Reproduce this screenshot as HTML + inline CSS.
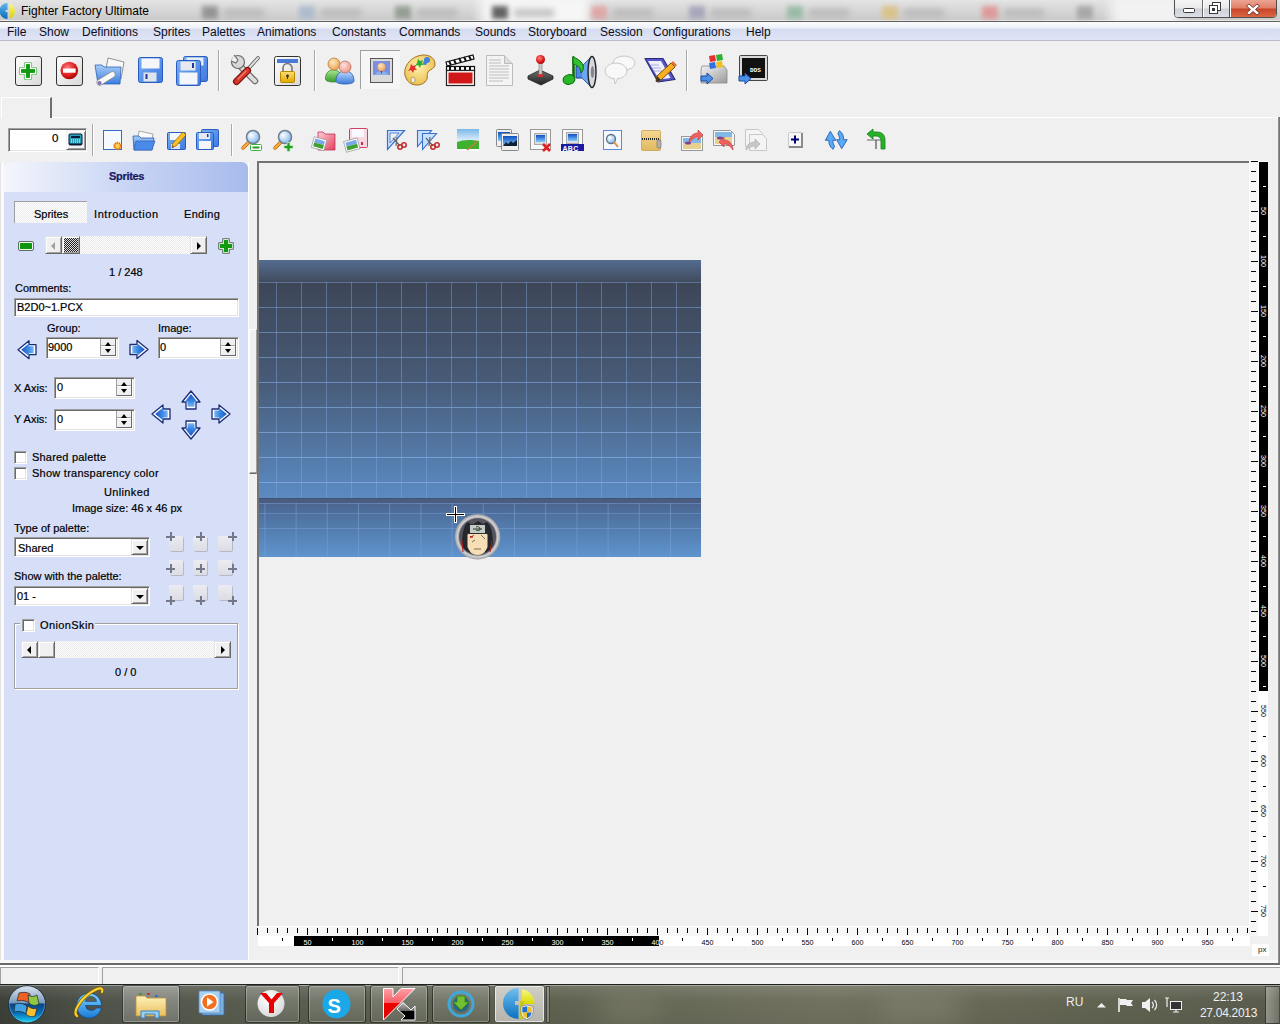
<!DOCTYPE html>
<html><head><meta charset="utf-8">
<style>
*{margin:0;padding:0;box-sizing:border-box}
html,body{width:1280px;height:1024px;overflow:hidden;background:#f0f0f0;font-family:"Liberation Sans",sans-serif;font-size:11px;color:#000}
.a{position:absolute}
.t{position:absolute;font-size:11px;line-height:13px;white-space:nowrap;color:#000;-webkit-text-stroke:0.2px #000}
.b{font-weight:bold}
#title{left:0;top:0;width:1280px;height:21px;background:linear-gradient(#e4e4e4,#d4d4d4 60%,#cacaca);border-bottom:1px solid #e8e8e8}
#tline{left:0;top:21px;width:1280px;height:1px;background:#5f5f5f}
#menu{left:0;top:22px;width:1280px;height:19px;background:linear-gradient(#fbfcfe 0,#eef1f9 6px,#d5dcef 7px,#dfe5f6 18px);border-bottom:1px solid #b9bdcb}
#menu span{position:absolute;top:3px;font-size:12px;line-height:14px;color:#0c0c20}
.sep{position:absolute;width:2px;border-left:1px solid #c5c5c5;border-right:1px solid #fff}
#panel{left:4px;top:162px;width:244px;height:798px;background:#d6dff7;border-radius:6px 6px 0 0;box-shadow:1px 0 0 #fff}
#phead{left:0;top:0;width:244px;height:30px;border-radius:6px 6px 0 0;background:linear-gradient(90deg,#f4f6fc 0%,#c9d5f4 50%,#a8bbed 100%)}


#taskbar{left:0;top:985px;width:1280px;height:39px;background:linear-gradient(90deg,#3f4a42,#5e6656 30%,#737663 60%,#6b705f 80%,#5c6054);border-top:1px solid #2a2f2a}
.fld{background:#fff;border:1px solid;border-color:#a0a0a0 #fff #fff #a0a0a0;box-shadow:inset 1px 1px 0 #696969,inset -1px -1px 0 #e3e3e3}
.chk{width:13px;height:13px;background:#fff;border:1px solid;border-color:#a0a0a0 #fff #fff #a0a0a0;box-shadow:inset 1px 1px 0 #696969,inset -1px -1px 0 #e3e3e3}
.sbtn{background:#f0f0f0;border:1px solid;border-color:#e3e3e3 #696969 #696969 #e3e3e3;box-shadow:inset 1px 1px 0 #fff,inset -1px -1px 0 #a0a0a0}
.track{background:repeating-conic-gradient(#fff 0 25%,#e8e8e8 0 50%) 0 0/2px 2px}
.tabsel{background:repeating-conic-gradient(#fdfdfd 0 25%,#ececec 0 50%) 0 0/2px 2px;border-top:1px solid #a0a0a0;border-left:1px solid #a0a0a0}
.tri-l,.tri-r,.tri-d,.tri-u{position:absolute;width:0;height:0;border:4px solid transparent}
.tri-l{border-left:0;border-right:4px solid #000}
.tri-r{border-right:0;border-left:4px solid #000}
.tri-d{border-bottom:0;border-top:4px solid #000}
.tri-u{border-top:0;border-bottom:4px solid #000}
.spin{width:16px;height:17px;border-left:1px solid #a0a0a0;background:linear-gradient(#f0f0f0 0 6px,#a0a0a0 6px 7px,#fff 7px 8px,#f0f0f0 8px);box-shadow:inset -1px -1px 0 #696969}
.spin:before{content:"";position:absolute;left:4px;top:3px;border:3.5px solid transparent;border-top:0;border-bottom:4px solid #000}
.spin:after{content:"";position:absolute;left:4px;top:10px;border:3.5px solid transparent;border-bottom:0;border-top:4px solid #000}
.sq{width:14px;height:15px;background:linear-gradient(#ececf2,#dcdce4);border-radius:2px;box-shadow:1px 1px 0 #b5b8c6}
.pl{width:9px;height:9px;background:linear-gradient(#747888,#747888) 0 3.5px/9px 2px no-repeat,linear-gradient(#747888,#747888) 3.5px 0/2px 9px no-repeat}
.rl{font-size:8px;line-height:10px;width:18px;text-align:center;transform:rotate(90deg);letter-spacing:-0.3px}
.bl{font-size:8px;line-height:10px;width:30px;text-align:center;letter-spacing:-0.3px}
.tb{top:985px;height:38px;border:1px solid rgba(0,0,0,.55);border-radius:3px;background:linear-gradient(rgba(255,255,255,.22),rgba(255,255,255,.08));box-shadow:inset 0 0 0 1px rgba(255,255,255,.25)}
</style></head><body>
<div id="title" class="a"></div>
<div id="tline" class="a"></div>
<div id="menu" class="a">
<span style="left:7px">File</span><span style="left:39px">Show</span><span style="left:82px">Definitions</span><span style="left:153px">Sprites</span><span style="left:202px">Palettes</span><span style="left:257px">Animations</span><span style="left:332px">Constants</span><span style="left:399px">Commands</span><span style="left:475px">Sounds</span><span style="left:528px">Storyboard</span><span style="left:600px">Session</span><span style="left:653px">Configurations</span><span style="left:746px">Help</span>
</div>
<div id="panel" class="a"><div id="phead" class="a"></div></div>
<div class="t b" style="left:109px;top:170px;color:#1b1d7c;letter-spacing:-0.3px">Sprites</div>
<div class="a tabsel" style="left:14px;top:201px;width:73px;height:22px"></div>
<div class="t" style="left:34px;top:208px">Sprites</div>
<div class="t" style="left:94px;top:208px;letter-spacing:0.6px">Introduction</div>
<div class="t" style="left:184px;top:208px;letter-spacing:0.3px">Ending</div>
<!-- sprite scroller -->
<svg class="a" style="left:16px;top:239px" width="20" height="14" viewBox="16 239 20 14"><rect x="18.5" y="241.5" width="15" height="9" rx="1.5" fill="#f0fff0" stroke="#5a6e5e"/><rect x="20" y="243" width="12" height="6" rx=".5" fill="#0f960f"/></svg>
<div class="a track" style="left:45px;top:236px;width:162px;height:18px"></div>
<div class="a sbtn" style="left:45px;top:236px;width:17px;height:18px"><div class="tri-l" style="left:5px;top:5px;border-right-color:#a0a0a0"></div></div>
<div class="a sbtn" style="left:62px;top:236px;width:18px;height:18px;background:repeating-conic-gradient(#222 0 25%,#ddd 0 50%) 0 0/2px 2px"></div>
<div class="a sbtn" style="left:190px;top:236px;width:17px;height:18px"><div class="tri-r" style="left:6px;top:5px"></div></div>
<svg class="a" style="left:216px;top:236px" width="20" height="20" viewBox="216 236 20 20"><path d="M222.7 238.7h6.6v4.0h4.0v6.6h-4.0v4.0h-6.6v-4.0h-4.0v-6.6h4.0z" fill="#f0fff0" stroke="#5a6e5e" stroke-width="1" stroke-linejoin="round"/><path d="M223.9 239.9h4.2v3.9999999999999996h3.9999999999999996v4.2h-3.9999999999999996v3.9999999999999996h-4.2v-3.9999999999999996h-3.9999999999999996v-4.2h3.9999999999999996z" fill="#109a10"/></svg>
<div class="t" style="left:109px;top:266px">1 / 248</div>
<div class="t" style="left:15px;top:282px">Comments:</div>
<div class="a fld" style="left:14px;top:298px;width:225px;height:19px"></div>
<div class="t" style="left:17px;top:301px">B2D0~1.PCX</div>
<div class="t" style="left:47px;top:322px">Group:</div>
<div class="t" style="left:158px;top:322px">Image:</div>
<div class="a fld" style="left:46px;top:337px;width:73px;height:22px"></div>
<div class="t" style="left:48px;top:341px">9000</div>
<div class="a spin" style="left:100px;top:339px"></div>
<div class="a fld" style="left:158px;top:337px;width:81px;height:22px"></div>
<div class="t" style="left:160px;top:341px">0</div>
<div class="a spin" style="left:220px;top:339px"></div>
<div class="t" style="left:14px;top:382px">X Axis:</div>
<div class="a fld" style="left:54px;top:377px;width:81px;height:22px"></div>
<div class="t" style="left:57px;top:381px">0</div>
<div class="a spin" style="left:116px;top:379px"></div>
<div class="t" style="left:14px;top:413px">Y Axis:</div>
<div class="a fld" style="left:54px;top:409px;width:81px;height:22px"></div>
<div class="t" style="left:57px;top:413px">0</div>
<div class="a spin" style="left:116px;top:411px"></div>
<!-- nav arrows -->
<svg class="a" style="left:0;top:330px" width="250" height="120" viewBox="0 330 250 120">
<defs><linearGradient id="arg" x1="0" y1="0" x2="0" y2="1"><stop offset="0" stop-color="#1d55c4"/><stop offset=".6" stop-color="#3c8ae6"/><stop offset="1" stop-color="#78b8f4"/></linearGradient></defs>
<g transform="translate(27 349.7) rotate(-90)"><path d="M0 -9L9 2H5V9H-5V2H-9Z" fill="#fff" stroke="#1b2a74" stroke-width="1.3" stroke-linejoin="round"/><path d="M0 -9L9 2H5V9H-5V2H-9Z" transform="scale(.7) translate(0 .6)" fill="url(#arg)"/></g>
<g transform="translate(139 349.5) rotate(90)"><path d="M0 -9L9 2H5V9H-5V2H-9Z" fill="#fff" stroke="#1b2a74" stroke-width="1.3" stroke-linejoin="round"/><path d="M0 -9L9 2H5V9H-5V2H-9Z" transform="scale(.7) translate(0 .6)" fill="url(#arg)"/></g>
<g transform="translate(191 400) rotate(0)"><path d="M0 -9L9 2H5V9H-5V2H-9Z" fill="#fff" stroke="#1b2a74" stroke-width="1.3" stroke-linejoin="round"/><path d="M0 -9L9 2H5V9H-5V2H-9Z" transform="scale(.7) translate(0 .6)" fill="url(#arg)"/></g>
<g transform="translate(191 430) rotate(180)"><path d="M0 -9L9 2H5V9H-5V2H-9Z" fill="#fff" stroke="#1b2a74" stroke-width="1.3" stroke-linejoin="round"/><path d="M0 -9L9 2H5V9H-5V2H-9Z" transform="scale(.7) translate(0 .6)" fill="url(#arg)"/></g>
<g transform="translate(161 414) rotate(-90)"><path d="M0 -9L9 2H5V9H-5V2H-9Z" fill="#fff" stroke="#1b2a74" stroke-width="1.3" stroke-linejoin="round"/><path d="M0 -9L9 2H5V9H-5V2H-9Z" transform="scale(.7) translate(0 .6)" fill="url(#arg)"/></g>
<g transform="translate(221 414) rotate(90)"><path d="M0 -9L9 2H5V9H-5V2H-9Z" fill="#fff" stroke="#1b2a74" stroke-width="1.3" stroke-linejoin="round"/><path d="M0 -9L9 2H5V9H-5V2H-9Z" transform="scale(.7) translate(0 .6)" fill="url(#arg)"/></g>
</svg>
<div class="a chk" style="left:14px;top:451px"></div>
<div class="t" style="left:32px;top:451px;letter-spacing:0.2px">Shared palette</div>
<div class="a chk" style="left:14px;top:467px"></div>
<div class="t" style="left:32px;top:467px;letter-spacing:0.25px">Show transparency color</div>
<div class="t" style="left:104px;top:486px;letter-spacing:0.35px">Unlinked</div>
<div class="t" style="left:72px;top:502px">Image size: 46 x 46 px</div>
<div class="t" style="left:14px;top:522px">Type of palette:</div>
<div class="a fld" style="left:14px;top:537px;width:136px;height:20px"></div>
<div class="t" style="left:18px;top:542px">Shared</div>
<div class="a sbtn" style="left:131px;top:539px;width:17px;height:16px"><div class="tri-d" style="left:4px;top:6px"></div></div>
<div class="t" style="left:14px;top:570px">Show with the palette:</div>
<div class="a fld" style="left:14px;top:586px;width:136px;height:20px"></div>
<div class="t" style="left:17px;top:590px">01 -</div>
<div class="a sbtn" style="left:131px;top:588px;width:17px;height:16px"><div class="tri-d" style="left:4px;top:6px"></div></div>
<!-- align grid -->
<div class="a sq" style="left:169px;top:536px"></div>
<div class="a pl" style="left:166px;top:532px"></div>
<div class="a sq" style="left:193px;top:536px"></div>
<div class="a pl" style="left:196px;top:532px"></div>
<div class="a sq" style="left:218px;top:536px"></div>
<div class="a pl" style="left:228px;top:532px"></div>
<div class="a sq" style="left:169px;top:560px"></div>
<div class="a pl" style="left:166px;top:564px"></div>
<div class="a sq" style="left:193px;top:560px"></div>
<div class="a pl" style="left:196px;top:564px"></div>
<div class="a sq" style="left:218px;top:560px"></div>
<div class="a pl" style="left:228px;top:564px"></div>
<div class="a sq" style="left:169px;top:585px"></div>
<div class="a pl" style="left:166px;top:596px"></div>
<div class="a sq" style="left:193px;top:585px"></div>
<div class="a pl" style="left:196px;top:596px"></div>
<div class="a sq" style="left:218px;top:585px"></div>
<div class="a pl" style="left:228px;top:596px"></div><!-- groupbox -->
<div class="a" style="left:14px;top:623px;width:224px;height:66px;border:1px solid #a0a0a0;box-shadow:1px 1px 0 #fff, inset 1px 1px 0 #fff"></div>
<div class="a" style="left:20px;top:617px;width:75px;height:14px;background:#d6dff7"></div>
<div class="a chk" style="left:22px;top:619px"></div>
<div class="t" style="left:40px;top:619px;letter-spacing:0.4px">OnionSkin</div>
<div class="a track" style="left:21px;top:641px;width:210px;height:17px"></div>
<div class="a sbtn" style="left:21px;top:641px;width:17px;height:17px"><div class="tri-l" style="left:5px;top:4px"></div></div>
<div class="a sbtn" style="left:38px;top:641px;width:17px;height:17px"></div>
<div class="a sbtn" style="left:214px;top:641px;width:17px;height:17px"><div class="tri-r" style="left:6px;top:4px"></div></div>
<div class="t" style="left:115px;top:666px">0 / 0</div>
<!-- toolbar 1 -->
<svg class="a" style="left:0;top:41px" width="800" height="58" viewBox="0 41 800 58">
<defs>
<linearGradient id="btng" x1="0" y1="0" x2="1" y2="1"><stop offset="0" stop-color="#ffffff"/><stop offset="1" stop-color="#d8d8d8"/></linearGradient>
<radialGradient id="redg" cx=".4" cy=".35" r=".7"><stop offset="0" stop-color="#ff8080"/><stop offset=".6" stop-color="#e02020"/><stop offset="1" stop-color="#a00000"/></radialGradient>
<linearGradient id="blueg" x1="0" y1="0" x2="0" y2="1"><stop offset="0" stop-color="#a9cdf6"/><stop offset="1" stop-color="#3a7de0"/></linearGradient>
<linearGradient id="flopg" x1="0" y1="0" x2="1" y2="1"><stop offset="0" stop-color="#7ab0f4"/><stop offset="1" stop-color="#3d78e0"/></linearGradient>
<linearGradient id="goldg" x1="0" y1="0" x2="0" y2="1"><stop offset="0" stop-color="#ffe070"/><stop offset="1" stop-color="#e0a800"/></linearGradient>
<linearGradient id="grayg" x1="0" y1="0" x2="1" y2="1"><stop offset="0" stop-color="#f4f4f4"/><stop offset="1" stop-color="#9a9a9a"/></linearGradient>
<radialGradient id="headg" cx=".4" cy=".35" r=".7"><stop offset="0" stop-color="#ffe8c0"/><stop offset="1" stop-color="#e8a050"/></radialGradient>
<radialGradient id="headp" cx=".4" cy=".35" r=".7"><stop offset="0" stop-color="#ffe4e0"/><stop offset="1" stop-color="#e89080"/></radialGradient>
<linearGradient id="bodyg" x1="0" y1="0" x2="0" y2="1"><stop offset="0" stop-color="#a8e890"/><stop offset="1" stop-color="#3a9a30"/></linearGradient>
<linearGradient id="bodyb" x1="0" y1="0" x2="0" y2="1"><stop offset="0" stop-color="#c0dcff"/><stop offset="1" stop-color="#3a7ad8"/></linearGradient>
<radialGradient id="palg" cx=".45" cy=".4" r=".7"><stop offset="0" stop-color="#fff0b0"/><stop offset="1" stop-color="#e8b840"/></radialGradient>
<linearGradient id="joyg" x1="0" y1="0" x2="0" y2="1"><stop offset="0" stop-color="#707070"/><stop offset="1" stop-color="#202020"/></linearGradient>
</defs>
<!-- plus button -->
<rect x="15.5" y="56.5" width="26" height="29" rx="2.5" fill="url(#btng)" stroke="#333"/>
<path d="M25.5 63.5h5v5h5v5h-5v5h-5v-5h-5v-5h5z" fill="#12921a" stroke="#5cc25c" stroke-width="3.2" stroke-linejoin="round"/>
<path d="M25.5 63.5h5v5h5v5h-5v5h-5v-5h-5v-5h5z" fill="#12921a" stroke="#fff" stroke-width="1.4" stroke-linejoin="round"/>
<path d="M26.2 64.2h3.6v5h5v3.6h-5v5h-3.6v-5h-5v-3.6h5z" fill="#129a12"/>
<!-- minus button -->
<rect x="56.5" y="56.5" width="26" height="29" rx="2.5" fill="url(#btng)" stroke="#333"/>
<circle cx="69.3" cy="70.5" r="8.8" fill="url(#redg)"/>
<rect x="63" y="68.5" width="12.6" height="4.2" fill="#fff"/>
<!-- folder with gamepad -->
<path d="M108 58l16 4-3 17-16-4z" fill="#f8f8f8" stroke="#777" stroke-width=".8"/>
<path d="M95 65h7l2 2h17l-1 17h-22z" fill="url(#blueg)" stroke="#2f63b8" stroke-width=".8"/>
<path d="M98 80l13-8c3-2 6 3 3 5l-13 8c-3 2-6-3-3-5z" fill="#fafafa" stroke="#888" stroke-width=".8"/>
<circle cx="99.5" cy="83" r="2" fill="#8070b0"/>
<!-- floppy -->
<rect x="138.5" y="57.5" width="24" height="25" rx="2" fill="url(#flopg)" stroke="#2a5cc0"/>
<rect x="141.5" y="58.5" width="18" height="10" fill="#f4f6fb"/>
<rect x="143.5" y="72.5" width="13" height="9" fill="#dfe3ea"/>
<rect x="145.5" y="74" width="2" height="5" fill="#1a3aa0"/>
<!-- double floppy -->
<rect x="183.5" y="56.5" width="24" height="25" rx="2" fill="url(#flopg)" stroke="#2a5cc0"/>
<rect x="186.5" y="57.5" width="17" height="8" fill="#e8ecf4"/>
<rect x="176.5" y="60.5" width="24" height="25" rx="2" fill="url(#flopg)" stroke="#2a5cc0"/>
<rect x="180.5" y="61.5" width="15" height="9" fill="#e6e9ef"/>
<rect x="192" y="63" width="2" height="5" fill="#1a3aa0"/>
<rect x="179.5" y="72.5" width="18" height="12" fill="#f4f6fb"/>
<!-- separator -->
<rect x="218" y="50" width="1" height="41" fill="#a8a8a8"/><rect x="219" y="50" width="1" height="41" fill="#fff"/>
<!-- tools -->
<path d="M238 64l17 17" stroke="#6a6a6a" stroke-width="6.5" stroke-linecap="round"/>
<path d="M238 64l17 17" stroke="#dcdcdc" stroke-width="4" stroke-linecap="round"/>
<path d="M233 59a7 7 0 0 0 9 9l-2.5-5.5z" fill="#6a6a6a"/>
<circle cx="238" cy="62" r="6.5" fill="#d8d8d8" stroke="#6a6a6a" stroke-width="1.2"/>
<path d="M234 55l4 5-2 3-5-2" fill="#f0f0f0" stroke="#6a6a6a" stroke-width="1.2" stroke-linejoin="round"/>
<path d="M258 58l-10 11" stroke="#5a5a5a" stroke-width="3.6" stroke-linecap="round"/>
<path d="M258 58l-10 11" stroke="#e0e0e0" stroke-width="2" stroke-linecap="round"/>
<path d="M247.5 70.5l-11 11" stroke="#7a1010" stroke-width="7" stroke-linecap="round"/>
<path d="M247.5 70.5l-11 11" stroke="#d83828" stroke-width="4.6" stroke-linecap="round"/>
<path d="M246 71l-8 8" stroke="#f08070" stroke-width="1.2" stroke-linecap="round"/>
<!-- lock window -->
<rect x="274.5" y="56.5" width="26" height="29" rx="2" fill="url(#btng)" stroke="#333"/>
<rect x="277" y="59" width="21" height="4" fill="#4a7ad8"/>
<path d="M283 72v-4a4.5 4.5 0 0 1 9 0v4" fill="none" stroke="#777" stroke-width="1.6"/>
<rect x="280.5" y="71.5" width="14" height="11" rx="1" fill="url(#goldg)" stroke="#b88a00"/>
<circle cx="287.5" cy="76" r="1.4" fill="#333"/><rect x="287" y="76" width="1" height="3" fill="#333"/>
<!-- separator -->
<rect x="314" y="50" width="1" height="41" fill="#a8a8a8"/><rect x="315" y="50" width="1" height="41" fill="#fff"/>
<!-- people -->
<path d="M325.5 79c0-6 3-9 8-9s8 3 8 9c0 2-3 3-8 3s-8-1-8-3z" fill="url(#bodyg)" stroke="#3a8a30" stroke-width=".8"/>
<circle cx="334" cy="64" r="6" fill="url(#headg)" stroke="#c07830" stroke-width=".8"/>
<path d="M336 81c0-7 4-10 9-10s9 3 9 10c0 2-4 3-9 3s-9-1-9-3z" fill="url(#bodyb)" stroke="#2a5ab0" stroke-width=".8"/>
<circle cx="345" cy="67" r="6" fill="url(#headp)" stroke="#c07060" stroke-width=".8"/>
<!-- pressed button -->
<rect x="360" y="50" width="40" height="39" fill="#f6f6f6"/>
<rect x="360" y="50" width="40" height="1" fill="#a0a0a0"/><rect x="360" y="50" width="1" height="39" fill="#a0a0a0"/>
<rect x="370.5" y="58.5" width="22" height="24" fill="#dadada" stroke="#555"/>
<rect x="373" y="61" width="17" height="14" fill="#7c8ee0"/>
<circle cx="381.5" cy="67" r="4" fill="url(#headg)"/>
<path d="M375 75c1-3 4-4 6.5-4s5.5 1 6.5 4z" fill="#8ab0e8"/>
<path d="M380.5 71h2l-1 3z" fill="#b02020"/>
<!-- palette -->
<path d="M406 78c-4-8 2-19 12-22 9-3 17 1 17 8 0 5-5 5-7 8-2 4 1 6-3 10-5 5-16 4-19-4z" fill="url(#palg)" stroke="#a07020" stroke-width="1"/>
<ellipse cx="413" cy="80" rx="2" ry="3" fill="#f0f0f0" stroke="#a07020" stroke-width=".6"/>
<path d="M411 64l2 2 3-1-1 3 2 2-3 0-1 3-2-3-3 1 2-3z" fill="#e03030"/>
<path d="M418 59l2 2 3-1-1 3 2 2-3 0-1 3-2-3-3 1 2-3z" fill="#30b030"/>
<circle cx="427" cy="60" r="3" fill="#4080e0"/><circle cx="425" cy="63" r="2" fill="#4080e0"/>
<!-- clapboard -->
<path d="M446 62l27-7 1 4-27 7z" fill="#fff" stroke="#111" stroke-width="1.2"/>
<path d="M449 61l2 4M454 60l2 4M459 58l2 4M464 57l2 4M469 56l2 4" stroke="#111" stroke-width="2"/>
<rect x="446.5" y="66.5" width="28" height="4" fill="#fff" stroke="#111" stroke-width="1.2"/>
<path d="M450 67v3M455 67v3M460 67v3M465 67v3M470 67v3" stroke="#111" stroke-width="2"/>
<rect x="446.5" y="70.5" width="28" height="15" fill="#fff" stroke="#222" stroke-width="1.2"/>
<rect x="448.5" y="72.5" width="24" height="11" fill="#d01818"/>
<!-- document -->
<path d="M486.5 55.5h18l8 8v22h-26z" fill="#f4f4f4" stroke="#bbb"/>
<path d="M504.5 55.5v8h8" fill="#ddd" stroke="#bbb"/>
<path d="M489 60h12M489 63h12M489 66h20M489 69h20M489 72h20M489 75h20M489 78h20M489 81h14" stroke="#bdbdbd" stroke-width="1"/>
<!-- joystick -->
<path d="M528 76l12-6 13 6v3l-12 6-13-6z" fill="url(#joyg)" stroke="#222" stroke-width=".8"/>
<rect x="539" y="63" width="3" height="12" fill="#ccc" stroke="#777" stroke-width=".6"/>
<ellipse cx="540.5" cy="75.5" rx="3" ry="1.5" fill="#d03030"/>
<circle cx="540.5" cy="59.5" r="4.5" fill="url(#redg)"/>
<!-- music speaker -->
<path d="M576 66h6l10-10v32l-10-10h-6z" fill="#4a8ae8" stroke="#1a3a90" stroke-width="1"/>
<path d="M582 66l10-10v32l-10-10z" fill="#7ab4f4" opacity=".7"/>
<ellipse cx="592" cy="72" rx="4" ry="15.5" fill="#d8d8e0" stroke="#222" stroke-width="1.4"/>
<ellipse cx="592.5" cy="72" rx="1.8" ry="6" fill="#888"/>
<path d="M573.5 57v22" stroke="#0a6a0a" stroke-width="2.6"/>
<path d="M573 56c3 3 8 4 10 9 1 3 0 6-2 8 0-4-3-8-8-9z" fill="#30c030" stroke="#0a6a0a" stroke-width="1"/>
<ellipse cx="569" cy="79.5" rx="6" ry="4.8" fill="#2ab82a" stroke="#0a6a0a" stroke-width="1" transform="rotate(-15 569 79.5)"/>
<!-- speech bubbles (disabled) -->
<ellipse cx="624" cy="63" rx="11" ry="7" fill="#f8f8f8" stroke="#c8c8c8" stroke-width="1"/>
<ellipse cx="616" cy="71" rx="11" ry="8" fill="#f8f8f8" stroke="#c8c8c8" stroke-width="1"/>
<path d="M614 78l1 6 3-6" fill="#f8f8f8" stroke="#c8c8c8" stroke-width="1"/>
<!-- notepad pencil -->
<path d="M645 58.5l18 0 12 21-17 2.5z" fill="#5858c8" stroke="#2a2a78" stroke-width="1.2" stroke-linejoin="round"/>
<path d="M648 61l13 0 9.5 17-11.5 1.5z" fill="#eef0ff"/>
<path d="M651 65h8M652 68h9M654 71h8" stroke="#9aa0d0" stroke-width=".8"/>
<path d="M657 76l14-13 4 4-14 13-5 1.5z" fill="#f8b020" stroke="#7a4a00" stroke-width="1"/>
<path d="M671 63l2-2 4 4-2 2z" fill="#e07040"/>
<path d="M657 76l4 4-5 1.5z" fill="#333"/>
<!-- separator -->
<rect x="686" y="50" width="1" height="41" fill="#a8a8a8"/><rect x="687" y="50" width="1" height="41" fill="#fff"/>
<!-- windows drive -->
<path d="M702 66h22l3 4v13h-26v-13z" fill="url(#grayg)" stroke="#888" stroke-width=".8"/>
<path d="M709 56l6-1 1 6-6 1z" fill="#e83030"/><path d="M716 55l6-1 1 6-6 1z" fill="#30b030"/>
<path d="M709 63l6-1 1 6-6 1z" fill="#3070e0"/><path d="M716 62l6-1 1 6-6 1z" fill="#f0c020"/>
<path d="M701 76h6v-3l6 5.5-6 5.5v-3h-6z" fill="#4a90e8" stroke="#1a4aa0" stroke-width="1"/>
<!-- DOS -->
<rect x="739.5" y="55.5" width="28" height="25" rx="1" fill="#d8d8d8" stroke="#444"/>
<rect x="742" y="58" width="23" height="20" fill="#111"/>
<text x="750" y="72" font-family="Liberation Mono" font-size="6" fill="#fff" font-weight="bold">DOS</text>
<path d="M739 76h6v-3l6 5.5-6 5.5v-3h-6z" fill="#4a90e8" stroke="#1a4aa0" stroke-width="1"/>
</svg>
<!-- tab strip -->
<div class="a" style="left:1px;top:97px;width:51px;height:21px;border-top:1px solid #fff;border-left:1px solid #fff;border-right:2px solid #6e6e6e;background:#f0f0f0"></div>
<div class="a" style="left:52px;top:117px;width:1228px;height:1px;background:#fff"></div>
<!-- toolbar 2 -->
<div class="a fld" style="left:8px;top:128px;width:79px;height:24px"></div>
<div class="t" style="left:52px;top:132px;font-size:11.5px">0</div>
<div class="a sbtn" style="left:66px;top:130px;width:20px;height:20px;border-color:#f0f0f0 #696969 #696969 #f0f0f0"></div>
<svg class="a" style="left:68px;top:133px" width="16" height="14" viewBox="0 0 16 14"><rect x=".5" y=".5" width="14" height="12" rx="2" fill="#0c1a3a"/><rect x="1.5" y="1.5" width="12" height="9" rx="1" fill="#2aa0b8"/><rect x="3" y="3" width="9" height="2" fill="#0c1a3a"/><path d="M3 7h1M5 7h1M7 7h1M9 7h1M11 7h1M3 9h1M5 9h1M7 9h1M9 9h1M11 9h1" stroke="#e0ffff" stroke-width="1"/></svg>
<div class="a" style="left:92px;top:124px;width:1px;height:32px;background:#a8a8a8"></div><div class="a" style="left:93px;top:124px;width:1px;height:32px;background:#fff"></div>
<div class="a" style="left:231px;top:124px;width:1px;height:32px;background:#a8a8a8"></div><div class="a" style="left:232px;top:124px;width:1px;height:32px;background:#fff"></div>
<svg class="a" style="left:95px;top:122px" width="800" height="36" viewBox="95 122 800 36">
<defs>
<linearGradient id="b2" x1="0" y1="0" x2="0" y2="1"><stop offset="0" stop-color="#a9cdf6"/><stop offset="1" stop-color="#3a7de0"/></linearGradient>
<linearGradient id="f2" x1="0" y1="0" x2="1" y2="1"><stop offset="0" stop-color="#7ab0f4"/><stop offset="1" stop-color="#3d78e0"/></linearGradient>
<radialGradient id="lens" cx=".35" cy=".35" r=".7"><stop offset="0" stop-color="#ffffff"/><stop offset="1" stop-color="#80b8f0"/></radialGradient>
<linearGradient id="sky" x1="0" y1="0" x2="0" y2="1"><stop offset="0" stop-color="#7ab8e8"/><stop offset="1" stop-color="#e8f4ff"/></linearGradient>
<linearGradient id="night" x1="0" y1="0" x2="0" y2="1"><stop offset="0" stop-color="#1050c0"/><stop offset="1" stop-color="#80c8ff"/></linearGradient>
<linearGradient id="redf" x1="0" y1="0" x2="1" y2="1"><stop offset="0" stop-color="#ffd0d8"/><stop offset="1" stop-color="#e04060"/></linearGradient>
<linearGradient id="zipg" x1="0" y1="0" x2="0" y2="1"><stop offset="0" stop-color="#f4d890"/><stop offset="1" stop-color="#e0b860"/></linearGradient>
</defs>
<!-- new doc -->
<rect x="103.5" y="130.5" width="18" height="19" fill="#f4f8ff" stroke="#3a6ac0"/>
<circle cx="117.5" cy="146" r="3.5" fill="#f8a020" stroke="#e07010" stroke-width="1.5" stroke-dasharray="1.2 1"/>
<circle cx="117.5" cy="146" r="2" fill="#ffd060"/>
<!-- folder -->
<path d="M139 131l14 3-2 12-14-3z" fill="#fafafa" stroke="#888" stroke-width=".7"/>
<path d="M133 136h6l2 2h13l-2 12h-18z" fill="url(#b2)" stroke="#2a5ab0" stroke-width=".8"/>
<path d="M136 141h19l-3 9h-18z" fill="#4a8ae8" stroke="#2a5ab0" stroke-width=".6"/>
<!-- save + pencil -->
<rect x="167.5" y="132.5" width="18" height="17" rx="1" fill="url(#f2)" stroke="#2a5cc0"/>
<rect x="170" y="133" width="12" height="7" fill="#f4f6fb"/>
<rect x="171" y="144" width="9" height="5" fill="#dfe3ea"/><rect x="172" y="145" width="1.5" height="3" fill="#1a3aa0"/>
<path d="M173 143l10-11 3 3-10 11-4 1z" fill="#f8c020" stroke="#906000" stroke-width=".7"/>
<!-- save all -->
<rect x="201.5" y="129.5" width="17" height="17" rx="1" fill="url(#f2)" stroke="#2a5cc0"/>
<rect x="196.5" y="132.5" width="17" height="17" rx="1" fill="url(#f2)" stroke="#2a5cc0"/>
<rect x="199" y="133" width="11" height="6" fill="#e6e9ef"/><rect x="207" y="134" width="1.5" height="3" fill="#1a3aa0"/>
<rect x="199" y="141" width="12" height="8" fill="#f4f6fb"/>
<!-- separator handled elsewhere -->
<!-- zoom out -->
<path d="M243 148l6-6" stroke="#c06000" stroke-width="3.5" stroke-linecap="round"/>
<path d="M243 148l6-6" stroke="#f8b040" stroke-width="2" stroke-linecap="round"/>
<circle cx="253" cy="137" r="6.5" fill="url(#lens)" stroke="#708090" stroke-width="1.6"/>
<rect x="250.5" y="144.5" width="11" height="6" rx="1" fill="#fff" stroke="#40b040"/>
<rect x="252.5" y="146.5" width="7" height="2" fill="#20a020"/>
<!-- zoom in -->
<path d="M275 148l6-6" stroke="#c06000" stroke-width="3.5" stroke-linecap="round"/>
<path d="M275 148l6-6" stroke="#f8b040" stroke-width="2" stroke-linecap="round"/>
<circle cx="285" cy="137" r="6.5" fill="url(#lens)" stroke="#708090" stroke-width="1.6"/>
<path d="M287 142.5h3v3h3v3h-3v3h-3v-3h-3v-3h3z" fill="#20a020" stroke="#c8f0c8" stroke-width=".8"/>
<!-- red folder + pic -->
<path d="M318 132h5l2 2h10v16h-17z" fill="url(#redf)" stroke="#c03050" stroke-width=".8"/>
<g transform="rotate(15 320 144)"><rect x="312.5" y="138.5" width="13" height="11" fill="#fff" stroke="#999" stroke-width=".7"/><rect x="314" y="140" width="10" height="4" fill="#7aa8e8"/><rect x="314" y="144" width="10" height="4" fill="#40a030"/></g>
<!-- red floppy + pic -->
<rect x="349.5" y="128.5" width="18" height="19" rx="1" fill="#f8d8e0" stroke="#d04060"/>
<rect x="352" y="129" width="12" height="8" fill="#f8f8ff"/>
<rect x="361" y="142" width="2" height="3" fill="#c03050"/>
<g transform="rotate(-15 352 144)"><rect x="344.5" y="139.5" width="14" height="11" fill="#fff" stroke="#999" stroke-width=".7"/><rect x="346" y="141" width="11" height="4" fill="#7aa8e8"/><rect x="346" y="145" width="11" height="4" fill="#40a030"/></g>
<!-- triangle + scissors -->
<path d="M387.5 130.5h17l-17 19z" fill="#c8e0ff" stroke="#3a70c8" stroke-width="1.2"/>
<path d="M390 133h9l-9 10z" fill="#f0f0f0" stroke="#3a70c8" stroke-width=".8"/>
<path d="M393 138l7 8M397 137l-1 9" stroke="#666" stroke-width="1.2"/>
<circle cx="400" cy="147" r="2.2" fill="none" stroke="#c03030" stroke-width="1.6"/><circle cx="404" cy="145" r="2.2" fill="none" stroke="#c03030" stroke-width="1.6"/>
<!-- double triangle + scissors -->
<path d="M417.5 130.5h14l-14 16z" fill="#c8e0ff" stroke="#3a70c8" stroke-width="1.1"/>
<path d="M422.5 133.5h14l-14 16z" fill="#c8e0ff" stroke="#3a70c8" stroke-width="1.1"/>
<path d="M426 138l7 8M430 137l-1 9" stroke="#666" stroke-width="1.2"/>
<circle cx="433" cy="147" r="2.2" fill="none" stroke="#c03030" stroke-width="1.6"/><circle cx="437" cy="145" r="2.2" fill="none" stroke="#c03030" stroke-width="1.6"/>
<!-- landscape + pencil -->
<rect x="457" y="129" width="22" height="22" fill="#fafafa"/>
<rect x="457" y="129" width="22" height="13" fill="url(#sky)"/>
<path d="M457 142c5-2 12-3 22-1v8h-22z" fill="#40b030"/>
<path d="M467 150l11-9" stroke="#c08030" stroke-width="1.6"/>
<!-- dual pics -->
<rect x="496.5" y="129.5" width="15" height="17" rx="1" fill="#f0f0f0" stroke="#888"/>
<rect x="498" y="132" width="12" height="9" fill="url(#night)"/>
<rect x="501.5" y="133.5" width="17" height="17" rx="1" fill="#f0f0f0" stroke="#888"/>
<rect x="503" y="136" width="14" height="10" fill="url(#night)"/>
<path d="M503 146l3-4 2 2 3-3 2 2 4-3v6z" fill="#102030"/>
<!-- pic x -->
<rect x="530.5" y="129.5" width="20" height="20" fill="#f8f8f8" stroke="#999"/>
<rect x="534.5" y="133.5" width="12" height="11" fill="#ddd" stroke="#aaa"/>
<rect x="536" y="135" width="9" height="7" fill="url(#night)"/>
<path d="M543 144l7 7M550 144l-7 7" stroke="#e02020" stroke-width="2.6"/>
<!-- pic abc -->
<rect x="562.5" y="129.5" width="20" height="18" fill="#f8f8f8" stroke="#999"/>
<rect x="566.5" y="132.5" width="12" height="11" fill="#ddd" stroke="#aaa"/>
<rect x="568" y="134" width="9" height="7" fill="url(#night)"/>
<rect x="561" y="144" width="23" height="7" fill="#1a1aa0"/>
<text x="562.5" y="150.5" font-family="Liberation Sans" font-weight="bold" font-size="7" fill="#fff" letter-spacing=".3">ABC</text>
<!-- magnifier doc -->
<rect x="603.5" y="130.5" width="18" height="19" fill="#f4f8ff" stroke="#5a8ad0"/>
<circle cx="611" cy="139" r="4.5" fill="url(#lens)" stroke="#607080" stroke-width="1.3"/>
<path d="M614 142l4 5" stroke="#e09040" stroke-width="2"/>
<!-- zip -->
<rect x="641.5" y="130.5" width="19" height="20" rx="1" fill="url(#zipg)" stroke="#c8a050" stroke-width=".8"/>
<path d="M642 139h17" stroke="#222" stroke-width="2" stroke-dasharray="1 1"/>
<rect x="657" y="140" width="4" height="8" rx="1.5" fill="#b0b0b0" stroke="#666" stroke-width=".6"/>
<!-- pic red arrow -->
<rect x="681.5" y="136.5" width="21" height="14" fill="#f8f8f8" stroke="#999"/>
<rect x="683" y="138" width="18" height="5" fill="#80b8e8"/><rect x="683" y="143" width="18" height="6" fill="#e8d090"/>
<ellipse cx="688" cy="143" rx="3" ry="1.5" fill="#8040a0"/>
<path d="M689 143c0-6 4-10 9-10v-3l5 5-5 5v-3c-4 0-7 3-9 6z" fill="#f06060" stroke="#c03030" stroke-width=".6"/>
<!-- pic red arrow 2 -->
<path d="M713.5 130.5h17l4 4v11h-21z" fill="#f8f8f8" stroke="#999"/>
<rect x="715" y="132" width="17" height="5" fill="#80b8e8"/><rect x="715" y="137" width="17" height="7" fill="#e8d090"/>
<ellipse cx="720" cy="138" rx="3" ry="1.5" fill="#8040a0"/>
<path d="M733 150c0-6-4-10-9-10v-3l-5 5 5 5v-3c4 0 7 3 9 6z" fill="#f06060" stroke="#c03030" stroke-width=".6"/>
<!-- gray pics -->
<path d="M745.5 129.5h13l4 4v13h-17z" fill="#f4f4f4" stroke="#c8c8c8"/>
<path d="M749.5 134.5h13l4 4v12h-17z" fill="#f4f4f4" stroke="#c8c8c8"/>
<path d="M746 150c0-5 4-8 9-8v-3l5 5-5 5v-3c-4 0-7 2-9 4z" fill="#c8c8c8" stroke="#a8a8a8" stroke-width=".6"/>
<!-- plus box -->
<rect x="788.5" y="132.5" width="14" height="15" rx="1" fill="#f6f6f6" stroke="#c8c8c8"/>
<rect x="789" y="146" width="14" height="2" fill="#8a8a8a"/><rect x="801" y="133" width="2" height="15" fill="#8a8a8a"/>
<path d="M791 139.5h8M795 135.5v8" stroke="#000070" stroke-width="2"/>
<!-- blue arrows -->
<path d="M830.3 131.3l5.5 9h-3c0 2 .5 4 1.8 6l-1.5 3c-3-2-4.3-5-4.3-9h-3.5z" fill="#5aaaf4" stroke="#2060b8" stroke-width=".9" stroke-linejoin="round"/>
<path d="M841.7 148.7l5.5-9h-3.5c0-4-1.3-7-4.3-9l-1.5 3c1.3 2 1.8 4 1.8 6h-3z" fill="#5aaaf4" stroke="#2060b8" stroke-width=".9" stroke-linejoin="round"/>
<!-- green arrow -->
<path d="M867 140h18" stroke="#666" stroke-width="1"/><path d="M876 140v9" stroke="#666" stroke-width="1.4"/>
<path d="M881 149v-8c0-3-2-5-5-5h-3v3l-6-5 6-5v3h4c5 0 8 3 8 8v9z" fill="#28b028" stroke="#108010" stroke-width=".8"/>
</svg>
<div class="a" style="left:257px;top:161px;width:993px;height:2px;background:#747474"></div>
<div class="a" style="left:257px;top:161px;width:2px;height:765px;background:#747474"></div>
<svg class="a" style="left:259px;top:260px" width="442" height="297" viewBox="259 260 442 297">
<defs><linearGradient id="ib1" x1="0" y1="0" x2="0" y2="1"><stop offset="0" stop-color="#546c90"/><stop offset="1" stop-color="#414b5d"/></linearGradient>
<linearGradient id="ib2" x1="0" y1="0" x2="0" y2="1"><stop offset="0" stop-color="#3d4657"/><stop offset=".45" stop-color="#475a76"/><stop offset="1" stop-color="#5b8bc3"/></linearGradient>
<linearGradient id="ib3" x1="0" y1="0" x2="0" y2="1"><stop offset="0" stop-color="#4b6590"/><stop offset=".3" stop-color="#5075a4"/><stop offset="1" stop-color="#5e94cd"/></linearGradient></defs>
<rect x="259" y="260" width="442" height="22" fill="url(#ib1)"/>
<rect x="259" y="282" width="442" height="216" fill="url(#ib2)"/>
<rect x="259" y="498" width="442" height="5" fill="#4a5d80"/><rect x="259" y="498" width="442" height="1" fill="#43536f"/>
<rect x="259" y="503" width="442" height="54" fill="url(#ib3)"/>
<rect x="259" y="282" width="442" height="1" fill="#86ace6" opacity=".45"/>
<rect x="259" y="307" width="442" height="1" fill="#86ace6" opacity=".49"/>
<rect x="259" y="332" width="442" height="1" fill="#86ace6" opacity=".53"/>
<rect x="259" y="357" width="442" height="1" fill="#86ace6" opacity=".57"/>
<rect x="259" y="382" width="442" height="1" fill="#86ace6" opacity=".61"/>
<rect x="259" y="407" width="442" height="1" fill="#86ace6" opacity=".65"/>
<rect x="259" y="432" width="442" height="1" fill="#86ace6" opacity=".69"/>
<rect x="259" y="457" width="442" height="1" fill="#86ace6" opacity=".73"/>
<rect x="259" y="482" width="442" height="1" fill="#86ace6" opacity=".77"/>
<rect x="276" y="282" width="1" height="216" fill="#86ace6" opacity=".42"/>
<rect x="301" y="282" width="1" height="216" fill="#86ace6" opacity=".42"/>
<rect x="326" y="282" width="1" height="216" fill="#86ace6" opacity=".42"/>
<rect x="351" y="282" width="1" height="216" fill="#86ace6" opacity=".42"/>
<rect x="376" y="282" width="1" height="216" fill="#86ace6" opacity=".42"/>
<rect x="401" y="282" width="1" height="216" fill="#86ace6" opacity=".42"/>
<rect x="426" y="282" width="1" height="216" fill="#86ace6" opacity=".42"/>
<rect x="451" y="282" width="1" height="216" fill="#86ace6" opacity=".42"/>
<rect x="476" y="282" width="1" height="216" fill="#86ace6" opacity=".42"/>
<rect x="501" y="282" width="1" height="216" fill="#86ace6" opacity=".42"/>
<rect x="526" y="282" width="1" height="216" fill="#86ace6" opacity=".42"/>
<rect x="551" y="282" width="1" height="216" fill="#86ace6" opacity=".42"/>
<rect x="576" y="282" width="1" height="216" fill="#86ace6" opacity=".42"/>
<rect x="601" y="282" width="1" height="216" fill="#86ace6" opacity=".42"/>
<rect x="626" y="282" width="1" height="216" fill="#86ace6" opacity=".42"/>
<rect x="651" y="282" width="1" height="216" fill="#86ace6" opacity=".42"/>
<rect x="676" y="282" width="1" height="216" fill="#86ace6" opacity=".42"/>
<rect x="259" y="503" width="442" height="1" fill="#7fa4dc" opacity=".45"/>
<rect x="259" y="513" width="442" height="1" fill="#7fa4dc" opacity=".45"/>
<rect x="259" y="528" width="442" height="1" fill="#7fa4dc" opacity=".45"/>
<rect x="264.4" y="503" width="1" height="54" fill="#7fa4dc" opacity=".5"/>
<rect x="295.6" y="503" width="1" height="54" fill="#7fa4dc" opacity=".5"/>
<rect x="326.8" y="503" width="1" height="54" fill="#7fa4dc" opacity=".5"/>
<rect x="358.0" y="503" width="1" height="54" fill="#7fa4dc" opacity=".5"/>
<rect x="389.2" y="503" width="1" height="54" fill="#7fa4dc" opacity=".5"/>
<rect x="420.4" y="503" width="1" height="54" fill="#7fa4dc" opacity=".5"/>
<rect x="451.6" y="503" width="1" height="54" fill="#7fa4dc" opacity=".5"/>
<rect x="482.8" y="503" width="1" height="54" fill="#7fa4dc" opacity=".5"/>
<rect x="514.0" y="503" width="1" height="54" fill="#7fa4dc" opacity=".5"/>
<rect x="545.2" y="503" width="1" height="54" fill="#7fa4dc" opacity=".5"/>
<rect x="576.4" y="503" width="1" height="54" fill="#7fa4dc" opacity=".5"/>
<rect x="607.6" y="503" width="1" height="54" fill="#7fa4dc" opacity=".5"/>
<rect x="638.8" y="503" width="1" height="54" fill="#7fa4dc" opacity=".5"/>
<rect x="670.0" y="503" width="1" height="54" fill="#7fa4dc" opacity=".5"/>
</svg>
<svg class="a" style="left:453px;top:512px" width="50" height="50" viewBox="453 512 50 50">
<defs><radialGradient id="ring" cx=".5" cy=".5" r=".5"><stop offset=".8" stop-color="#8a8a90"/><stop offset=".88" stop-color="#d4d4d4"/><stop offset="1" stop-color="#9a9aa0"/></radialGradient></defs>
<circle cx="477.6" cy="536.8" r="22.8" fill="url(#ring)"/>
<circle cx="477.6" cy="536.8" r="18.5" fill="#55555e"/>
<path d="M462 544c0-10 2-20 6-22l4 3 6-4 5 3 4-2c4 3 6 12 6 22-2 6-6 9-15 10-10-1-15-4-16-10z" fill="#26262e"/>
<path d="M467.5 535c0-1 1-1.5 3-1.5h14c2 0 3 .5 3 1.5v12c-2 5-5 8-10 8s-8-3-10-8z" fill="#f6deb6"/>
<rect x="469.5" y="524.5" width="16" height="9" fill="#c4ccc4" stroke="#2a2a30" stroke-width="1"/>
<path d="M473 529h9M476 527c2-1 4 0 4 2s-2 2-4 1" stroke="#2a3a30" stroke-width="1" fill="none"/>
<path d="M470 538l4-3M481 535l4 4M472 542l3-2" stroke="#4a3a30" stroke-width=".7"/>
<rect x="470" y="536" width="3" height="1.5" fill="#c02020"/>
<path d="M474 549h7" stroke="#6a4a3a" stroke-width=".8"/>
<path d="M462 540l1 12M492 540l-2 12" stroke="#b01818" stroke-width="1"/>
</svg>

<svg class="a" style="left:446px;top:506px" width="19" height="18" viewBox="446 506 19 18" shape-rendering="crispEdges"><rect x="454" y="506" width="3" height="17" fill="#fff"/><rect x="446" y="513" width="19" height="3" fill="#fff"/><rect x="455" y="507" width="1" height="15" fill="#000"/><rect x="447" y="514" width="17" height="1" fill="#000"/></svg>
<svg class="a" style="left:1249px;top:160px" width="21" height="777" viewBox="1249 160 21 777">
<defs><clipPath id="rcb"><rect x="1259" y="162" width="9" height="529"/></clipPath><clipPath id="bcb"><rect x="294" y="936" width="365" height="10"/></clipPath></defs>
<rect x="1249" y="160" width="10" height="776" fill="#fff"/>
<rect x="1250" y="161" width="8" height="775" fill="#f6f6f6"/>
<rect x="1259" y="161" width="9" height="775" fill="#fff"/>
<rect x="1251" y="161" width="7" height="1" fill="#000"/>
<rect x="1251" y="171" width="5" height="1" fill="#000"/>
<rect x="1251" y="181" width="5" height="1" fill="#000"/>
<rect x="1251" y="191" width="5" height="1" fill="#000"/>
<rect x="1251" y="201" width="5" height="1" fill="#000"/>
<rect x="1251" y="211" width="7" height="1" fill="#000"/>
<rect x="1251" y="221" width="5" height="1" fill="#000"/>
<rect x="1251" y="231" width="5" height="1" fill="#000"/>
<rect x="1251" y="241" width="5" height="1" fill="#000"/>
<rect x="1251" y="251" width="5" height="1" fill="#000"/>
<rect x="1251" y="261" width="7" height="1" fill="#000"/>
<rect x="1251" y="271" width="5" height="1" fill="#000"/>
<rect x="1251" y="281" width="5" height="1" fill="#000"/>
<rect x="1251" y="291" width="5" height="1" fill="#000"/>
<rect x="1251" y="301" width="5" height="1" fill="#000"/>
<rect x="1251" y="311" width="7" height="1" fill="#000"/>
<rect x="1251" y="321" width="5" height="1" fill="#000"/>
<rect x="1251" y="331" width="5" height="1" fill="#000"/>
<rect x="1251" y="341" width="5" height="1" fill="#000"/>
<rect x="1251" y="351" width="5" height="1" fill="#000"/>
<rect x="1251" y="361" width="7" height="1" fill="#000"/>
<rect x="1251" y="371" width="5" height="1" fill="#000"/>
<rect x="1251" y="381" width="5" height="1" fill="#000"/>
<rect x="1251" y="391" width="5" height="1" fill="#000"/>
<rect x="1251" y="401" width="5" height="1" fill="#000"/>
<rect x="1251" y="411" width="7" height="1" fill="#000"/>
<rect x="1251" y="421" width="5" height="1" fill="#000"/>
<rect x="1251" y="431" width="5" height="1" fill="#000"/>
<rect x="1251" y="441" width="5" height="1" fill="#000"/>
<rect x="1251" y="451" width="5" height="1" fill="#000"/>
<rect x="1251" y="461" width="7" height="1" fill="#000"/>
<rect x="1251" y="471" width="5" height="1" fill="#000"/>
<rect x="1251" y="481" width="5" height="1" fill="#000"/>
<rect x="1251" y="491" width="5" height="1" fill="#000"/>
<rect x="1251" y="501" width="5" height="1" fill="#000"/>
<rect x="1251" y="511" width="7" height="1" fill="#000"/>
<rect x="1251" y="521" width="5" height="1" fill="#000"/>
<rect x="1251" y="531" width="5" height="1" fill="#000"/>
<rect x="1251" y="541" width="5" height="1" fill="#000"/>
<rect x="1251" y="551" width="5" height="1" fill="#000"/>
<rect x="1251" y="561" width="7" height="1" fill="#000"/>
<rect x="1251" y="571" width="5" height="1" fill="#000"/>
<rect x="1251" y="581" width="5" height="1" fill="#000"/>
<rect x="1251" y="591" width="5" height="1" fill="#000"/>
<rect x="1251" y="601" width="5" height="1" fill="#000"/>
<rect x="1251" y="611" width="7" height="1" fill="#000"/>
<rect x="1251" y="621" width="5" height="1" fill="#000"/>
<rect x="1251" y="631" width="5" height="1" fill="#000"/>
<rect x="1251" y="641" width="5" height="1" fill="#000"/>
<rect x="1251" y="651" width="5" height="1" fill="#000"/>
<rect x="1251" y="661" width="7" height="1" fill="#000"/>
<rect x="1251" y="671" width="5" height="1" fill="#000"/>
<rect x="1251" y="681" width="5" height="1" fill="#000"/>
<rect x="1251" y="691" width="5" height="1" fill="#000"/>
<rect x="1251" y="701" width="5" height="1" fill="#000"/>
<rect x="1251" y="711" width="7" height="1" fill="#000"/>
<rect x="1251" y="721" width="5" height="1" fill="#000"/>
<rect x="1251" y="731" width="5" height="1" fill="#000"/>
<rect x="1251" y="741" width="5" height="1" fill="#000"/>
<rect x="1251" y="751" width="5" height="1" fill="#000"/>
<rect x="1251" y="761" width="7" height="1" fill="#000"/>
<rect x="1251" y="771" width="5" height="1" fill="#000"/>
<rect x="1251" y="781" width="5" height="1" fill="#000"/>
<rect x="1251" y="791" width="5" height="1" fill="#000"/>
<rect x="1251" y="801" width="5" height="1" fill="#000"/>
<rect x="1251" y="811" width="7" height="1" fill="#000"/>
<rect x="1251" y="821" width="5" height="1" fill="#000"/>
<rect x="1251" y="831" width="5" height="1" fill="#000"/>
<rect x="1251" y="841" width="5" height="1" fill="#000"/>
<rect x="1251" y="851" width="5" height="1" fill="#000"/>
<rect x="1251" y="861" width="7" height="1" fill="#000"/>
<rect x="1251" y="871" width="5" height="1" fill="#000"/>
<rect x="1251" y="881" width="5" height="1" fill="#000"/>
<rect x="1251" y="891" width="5" height="1" fill="#000"/>
<rect x="1251" y="901" width="5" height="1" fill="#000"/>
<rect x="1251" y="911" width="7" height="1" fill="#000"/>
<rect x="1251" y="921" width="5" height="1" fill="#000"/>
<rect x="1251" y="931" width="5" height="1" fill="#000"/>
<text transform="translate(1261 211) rotate(90)" x="0" y="0" text-anchor="middle" font-size="8" font-family="Liberation Sans" fill="#000" textLength="8" lengthAdjust="spacingAndGlyphs">50</text>
<text transform="translate(1261 261) rotate(90)" x="0" y="0" text-anchor="middle" font-size="8" font-family="Liberation Sans" fill="#000" textLength="12" lengthAdjust="spacingAndGlyphs">100</text>
<text transform="translate(1261 311) rotate(90)" x="0" y="0" text-anchor="middle" font-size="8" font-family="Liberation Sans" fill="#000" textLength="12" lengthAdjust="spacingAndGlyphs">150</text>
<text transform="translate(1261 361) rotate(90)" x="0" y="0" text-anchor="middle" font-size="8" font-family="Liberation Sans" fill="#000" textLength="12" lengthAdjust="spacingAndGlyphs">200</text>
<text transform="translate(1261 411) rotate(90)" x="0" y="0" text-anchor="middle" font-size="8" font-family="Liberation Sans" fill="#000" textLength="12" lengthAdjust="spacingAndGlyphs">250</text>
<text transform="translate(1261 461) rotate(90)" x="0" y="0" text-anchor="middle" font-size="8" font-family="Liberation Sans" fill="#000" textLength="12" lengthAdjust="spacingAndGlyphs">300</text>
<text transform="translate(1261 511) rotate(90)" x="0" y="0" text-anchor="middle" font-size="8" font-family="Liberation Sans" fill="#000" textLength="12" lengthAdjust="spacingAndGlyphs">350</text>
<text transform="translate(1261 561) rotate(90)" x="0" y="0" text-anchor="middle" font-size="8" font-family="Liberation Sans" fill="#000" textLength="12" lengthAdjust="spacingAndGlyphs">400</text>
<text transform="translate(1261 611) rotate(90)" x="0" y="0" text-anchor="middle" font-size="8" font-family="Liberation Sans" fill="#000" textLength="12" lengthAdjust="spacingAndGlyphs">450</text>
<text transform="translate(1261 661) rotate(90)" x="0" y="0" text-anchor="middle" font-size="8" font-family="Liberation Sans" fill="#000" textLength="12" lengthAdjust="spacingAndGlyphs">500</text>
<text transform="translate(1261 711) rotate(90)" x="0" y="0" text-anchor="middle" font-size="8" font-family="Liberation Sans" fill="#000" textLength="12" lengthAdjust="spacingAndGlyphs">550</text>
<text transform="translate(1261 761) rotate(90)" x="0" y="0" text-anchor="middle" font-size="8" font-family="Liberation Sans" fill="#000" textLength="12" lengthAdjust="spacingAndGlyphs">600</text>
<text transform="translate(1261 811) rotate(90)" x="0" y="0" text-anchor="middle" font-size="8" font-family="Liberation Sans" fill="#000" textLength="12" lengthAdjust="spacingAndGlyphs">650</text>
<text transform="translate(1261 861) rotate(90)" x="0" y="0" text-anchor="middle" font-size="8" font-family="Liberation Sans" fill="#000" textLength="12" lengthAdjust="spacingAndGlyphs">700</text>
<text transform="translate(1261 911) rotate(90)" x="0" y="0" text-anchor="middle" font-size="8" font-family="Liberation Sans" fill="#000" textLength="12" lengthAdjust="spacingAndGlyphs">750</text>
<rect x="1263" y="186" width="3" height="1" fill="#000"/>
<rect x="1263" y="236" width="3" height="1" fill="#000"/>
<rect x="1263" y="286" width="3" height="1" fill="#000"/>
<rect x="1263" y="336" width="3" height="1" fill="#000"/>
<rect x="1263" y="386" width="3" height="1" fill="#000"/>
<rect x="1263" y="436" width="3" height="1" fill="#000"/>
<rect x="1263" y="486" width="3" height="1" fill="#000"/>
<rect x="1263" y="536" width="3" height="1" fill="#000"/>
<rect x="1263" y="586" width="3" height="1" fill="#000"/>
<rect x="1263" y="636" width="3" height="1" fill="#000"/>
<rect x="1263" y="686" width="3" height="1" fill="#000"/>
<rect x="1263" y="736" width="3" height="1" fill="#000"/>
<rect x="1263" y="786" width="3" height="1" fill="#000"/>
<rect x="1263" y="836" width="3" height="1" fill="#000"/>
<rect x="1263" y="886" width="3" height="1" fill="#000"/>
<rect x="1259" y="162" width="9" height="529" fill="#000"/>
<g clip-path="url(#rcb)"><text transform="translate(1261 211) rotate(90)" x="0" y="0" text-anchor="middle" font-size="8" font-family="Liberation Sans" fill="#fff" textLength="8" lengthAdjust="spacingAndGlyphs">50</text><text transform="translate(1261 261) rotate(90)" x="0" y="0" text-anchor="middle" font-size="8" font-family="Liberation Sans" fill="#fff" textLength="12" lengthAdjust="spacingAndGlyphs">100</text><text transform="translate(1261 311) rotate(90)" x="0" y="0" text-anchor="middle" font-size="8" font-family="Liberation Sans" fill="#fff" textLength="12" lengthAdjust="spacingAndGlyphs">150</text><text transform="translate(1261 361) rotate(90)" x="0" y="0" text-anchor="middle" font-size="8" font-family="Liberation Sans" fill="#fff" textLength="12" lengthAdjust="spacingAndGlyphs">200</text><text transform="translate(1261 411) rotate(90)" x="0" y="0" text-anchor="middle" font-size="8" font-family="Liberation Sans" fill="#fff" textLength="12" lengthAdjust="spacingAndGlyphs">250</text><text transform="translate(1261 461) rotate(90)" x="0" y="0" text-anchor="middle" font-size="8" font-family="Liberation Sans" fill="#fff" textLength="12" lengthAdjust="spacingAndGlyphs">300</text><text transform="translate(1261 511) rotate(90)" x="0" y="0" text-anchor="middle" font-size="8" font-family="Liberation Sans" fill="#fff" textLength="12" lengthAdjust="spacingAndGlyphs">350</text><text transform="translate(1261 561) rotate(90)" x="0" y="0" text-anchor="middle" font-size="8" font-family="Liberation Sans" fill="#fff" textLength="12" lengthAdjust="spacingAndGlyphs">400</text><text transform="translate(1261 611) rotate(90)" x="0" y="0" text-anchor="middle" font-size="8" font-family="Liberation Sans" fill="#fff" textLength="12" lengthAdjust="spacingAndGlyphs">450</text><text transform="translate(1261 661) rotate(90)" x="0" y="0" text-anchor="middle" font-size="8" font-family="Liberation Sans" fill="#fff" textLength="12" lengthAdjust="spacingAndGlyphs">500</text><text transform="translate(1261 711) rotate(90)" x="0" y="0" text-anchor="middle" font-size="8" font-family="Liberation Sans" fill="#fff" textLength="12" lengthAdjust="spacingAndGlyphs">550</text><text transform="translate(1261 761) rotate(90)" x="0" y="0" text-anchor="middle" font-size="8" font-family="Liberation Sans" fill="#fff" textLength="12" lengthAdjust="spacingAndGlyphs">600</text><text transform="translate(1261 811) rotate(90)" x="0" y="0" text-anchor="middle" font-size="8" font-family="Liberation Sans" fill="#fff" textLength="12" lengthAdjust="spacingAndGlyphs">650</text><text transform="translate(1261 861) rotate(90)" x="0" y="0" text-anchor="middle" font-size="8" font-family="Liberation Sans" fill="#fff" textLength="12" lengthAdjust="spacingAndGlyphs">700</text><text transform="translate(1261 911) rotate(90)" x="0" y="0" text-anchor="middle" font-size="8" font-family="Liberation Sans" fill="#fff" textLength="12" lengthAdjust="spacingAndGlyphs">750</text><rect x="1263" y="186" width="3" height="1" fill="#fff"/><rect x="1263" y="236" width="3" height="1" fill="#fff"/><rect x="1263" y="286" width="3" height="1" fill="#fff"/><rect x="1263" y="336" width="3" height="1" fill="#fff"/><rect x="1263" y="386" width="3" height="1" fill="#fff"/><rect x="1263" y="436" width="3" height="1" fill="#fff"/><rect x="1263" y="486" width="3" height="1" fill="#fff"/><rect x="1263" y="536" width="3" height="1" fill="#fff"/><rect x="1263" y="586" width="3" height="1" fill="#fff"/><rect x="1263" y="636" width="3" height="1" fill="#fff"/><rect x="1263" y="686" width="3" height="1" fill="#fff"/><rect x="1263" y="736" width="3" height="1" fill="#fff"/><rect x="1263" y="786" width="3" height="1" fill="#fff"/><rect x="1263" y="836" width="3" height="1" fill="#fff"/><rect x="1263" y="886" width="3" height="1" fill="#fff"/></g>
</svg>
<svg class="a" style="left:257px;top:926px" width="993" height="21" viewBox="257 926 993 21">
<defs><clipPath id="bcb2"><rect x="294" y="936" width="365" height="10"/></clipPath></defs>
<rect x="258" y="927" width="992" height="9" fill="#f6f6f6"/>
<rect x="258" y="926" width="992" height="1" fill="#fff"/>
<rect x="258" y="936" width="992" height="10" fill="#fff"/>
<rect x="257" y="928" width="1" height="7" fill="#000"/>
<rect x="267" y="928" width="1" height="5" fill="#000"/>
<rect x="277" y="928" width="1" height="5" fill="#000"/>
<rect x="287" y="928" width="1" height="5" fill="#000"/>
<rect x="297" y="928" width="1" height="5" fill="#000"/>
<rect x="307" y="928" width="1" height="7" fill="#000"/>
<rect x="317" y="928" width="1" height="5" fill="#000"/>
<rect x="327" y="928" width="1" height="5" fill="#000"/>
<rect x="337" y="928" width="1" height="5" fill="#000"/>
<rect x="347" y="928" width="1" height="5" fill="#000"/>
<rect x="357" y="928" width="1" height="7" fill="#000"/>
<rect x="367" y="928" width="1" height="5" fill="#000"/>
<rect x="377" y="928" width="1" height="5" fill="#000"/>
<rect x="387" y="928" width="1" height="5" fill="#000"/>
<rect x="397" y="928" width="1" height="5" fill="#000"/>
<rect x="407" y="928" width="1" height="7" fill="#000"/>
<rect x="417" y="928" width="1" height="5" fill="#000"/>
<rect x="427" y="928" width="1" height="5" fill="#000"/>
<rect x="437" y="928" width="1" height="5" fill="#000"/>
<rect x="447" y="928" width="1" height="5" fill="#000"/>
<rect x="457" y="928" width="1" height="7" fill="#000"/>
<rect x="467" y="928" width="1" height="5" fill="#000"/>
<rect x="477" y="928" width="1" height="5" fill="#000"/>
<rect x="487" y="928" width="1" height="5" fill="#000"/>
<rect x="497" y="928" width="1" height="5" fill="#000"/>
<rect x="507" y="928" width="1" height="7" fill="#000"/>
<rect x="517" y="928" width="1" height="5" fill="#000"/>
<rect x="527" y="928" width="1" height="5" fill="#000"/>
<rect x="537" y="928" width="1" height="5" fill="#000"/>
<rect x="547" y="928" width="1" height="5" fill="#000"/>
<rect x="557" y="928" width="1" height="7" fill="#000"/>
<rect x="567" y="928" width="1" height="5" fill="#000"/>
<rect x="577" y="928" width="1" height="5" fill="#000"/>
<rect x="587" y="928" width="1" height="5" fill="#000"/>
<rect x="597" y="928" width="1" height="5" fill="#000"/>
<rect x="607" y="928" width="1" height="7" fill="#000"/>
<rect x="617" y="928" width="1" height="5" fill="#000"/>
<rect x="627" y="928" width="1" height="5" fill="#000"/>
<rect x="637" y="928" width="1" height="5" fill="#000"/>
<rect x="647" y="928" width="1" height="5" fill="#000"/>
<rect x="657" y="928" width="1" height="7" fill="#000"/>
<rect x="667" y="928" width="1" height="5" fill="#000"/>
<rect x="677" y="928" width="1" height="5" fill="#000"/>
<rect x="687" y="928" width="1" height="5" fill="#000"/>
<rect x="697" y="928" width="1" height="5" fill="#000"/>
<rect x="707" y="928" width="1" height="7" fill="#000"/>
<rect x="717" y="928" width="1" height="5" fill="#000"/>
<rect x="727" y="928" width="1" height="5" fill="#000"/>
<rect x="737" y="928" width="1" height="5" fill="#000"/>
<rect x="747" y="928" width="1" height="5" fill="#000"/>
<rect x="757" y="928" width="1" height="7" fill="#000"/>
<rect x="767" y="928" width="1" height="5" fill="#000"/>
<rect x="777" y="928" width="1" height="5" fill="#000"/>
<rect x="787" y="928" width="1" height="5" fill="#000"/>
<rect x="797" y="928" width="1" height="5" fill="#000"/>
<rect x="807" y="928" width="1" height="7" fill="#000"/>
<rect x="817" y="928" width="1" height="5" fill="#000"/>
<rect x="827" y="928" width="1" height="5" fill="#000"/>
<rect x="837" y="928" width="1" height="5" fill="#000"/>
<rect x="847" y="928" width="1" height="5" fill="#000"/>
<rect x="857" y="928" width="1" height="7" fill="#000"/>
<rect x="867" y="928" width="1" height="5" fill="#000"/>
<rect x="877" y="928" width="1" height="5" fill="#000"/>
<rect x="887" y="928" width="1" height="5" fill="#000"/>
<rect x="897" y="928" width="1" height="5" fill="#000"/>
<rect x="907" y="928" width="1" height="7" fill="#000"/>
<rect x="917" y="928" width="1" height="5" fill="#000"/>
<rect x="927" y="928" width="1" height="5" fill="#000"/>
<rect x="937" y="928" width="1" height="5" fill="#000"/>
<rect x="947" y="928" width="1" height="5" fill="#000"/>
<rect x="957" y="928" width="1" height="7" fill="#000"/>
<rect x="967" y="928" width="1" height="5" fill="#000"/>
<rect x="977" y="928" width="1" height="5" fill="#000"/>
<rect x="987" y="928" width="1" height="5" fill="#000"/>
<rect x="997" y="928" width="1" height="5" fill="#000"/>
<rect x="1007" y="928" width="1" height="7" fill="#000"/>
<rect x="1017" y="928" width="1" height="5" fill="#000"/>
<rect x="1027" y="928" width="1" height="5" fill="#000"/>
<rect x="1037" y="928" width="1" height="5" fill="#000"/>
<rect x="1047" y="928" width="1" height="5" fill="#000"/>
<rect x="1057" y="928" width="1" height="7" fill="#000"/>
<rect x="1067" y="928" width="1" height="5" fill="#000"/>
<rect x="1077" y="928" width="1" height="5" fill="#000"/>
<rect x="1087" y="928" width="1" height="5" fill="#000"/>
<rect x="1097" y="928" width="1" height="5" fill="#000"/>
<rect x="1107" y="928" width="1" height="7" fill="#000"/>
<rect x="1117" y="928" width="1" height="5" fill="#000"/>
<rect x="1127" y="928" width="1" height="5" fill="#000"/>
<rect x="1137" y="928" width="1" height="5" fill="#000"/>
<rect x="1147" y="928" width="1" height="5" fill="#000"/>
<rect x="1157" y="928" width="1" height="7" fill="#000"/>
<rect x="1167" y="928" width="1" height="5" fill="#000"/>
<rect x="1177" y="928" width="1" height="5" fill="#000"/>
<rect x="1187" y="928" width="1" height="5" fill="#000"/>
<rect x="1197" y="928" width="1" height="5" fill="#000"/>
<rect x="1207" y="928" width="1" height="7" fill="#000"/>
<rect x="1217" y="928" width="1" height="5" fill="#000"/>
<rect x="1227" y="928" width="1" height="5" fill="#000"/>
<rect x="1237" y="928" width="1" height="5" fill="#000"/>
<rect x="1247" y="928" width="1" height="5" fill="#000"/>
<text x="307.5" y="945" text-anchor="middle" font-size="8" font-family="Liberation Sans" fill="#000" textLength="8" lengthAdjust="spacingAndGlyphs">50</text>
<text x="357.5" y="945" text-anchor="middle" font-size="8" font-family="Liberation Sans" fill="#000" textLength="12" lengthAdjust="spacingAndGlyphs">100</text>
<text x="407.5" y="945" text-anchor="middle" font-size="8" font-family="Liberation Sans" fill="#000" textLength="12" lengthAdjust="spacingAndGlyphs">150</text>
<text x="457.5" y="945" text-anchor="middle" font-size="8" font-family="Liberation Sans" fill="#000" textLength="12" lengthAdjust="spacingAndGlyphs">200</text>
<text x="507.5" y="945" text-anchor="middle" font-size="8" font-family="Liberation Sans" fill="#000" textLength="12" lengthAdjust="spacingAndGlyphs">250</text>
<text x="557.5" y="945" text-anchor="middle" font-size="8" font-family="Liberation Sans" fill="#000" textLength="12" lengthAdjust="spacingAndGlyphs">300</text>
<text x="607.5" y="945" text-anchor="middle" font-size="8" font-family="Liberation Sans" fill="#000" textLength="12" lengthAdjust="spacingAndGlyphs">350</text>
<text x="657.5" y="945" text-anchor="middle" font-size="8" font-family="Liberation Sans" fill="#000" textLength="12" lengthAdjust="spacingAndGlyphs">400</text>
<text x="707.5" y="945" text-anchor="middle" font-size="8" font-family="Liberation Sans" fill="#000" textLength="12" lengthAdjust="spacingAndGlyphs">450</text>
<text x="757.5" y="945" text-anchor="middle" font-size="8" font-family="Liberation Sans" fill="#000" textLength="12" lengthAdjust="spacingAndGlyphs">500</text>
<text x="807.5" y="945" text-anchor="middle" font-size="8" font-family="Liberation Sans" fill="#000" textLength="12" lengthAdjust="spacingAndGlyphs">550</text>
<text x="857.5" y="945" text-anchor="middle" font-size="8" font-family="Liberation Sans" fill="#000" textLength="12" lengthAdjust="spacingAndGlyphs">600</text>
<text x="907.5" y="945" text-anchor="middle" font-size="8" font-family="Liberation Sans" fill="#000" textLength="12" lengthAdjust="spacingAndGlyphs">650</text>
<text x="957.5" y="945" text-anchor="middle" font-size="8" font-family="Liberation Sans" fill="#000" textLength="12" lengthAdjust="spacingAndGlyphs">700</text>
<text x="1007.5" y="945" text-anchor="middle" font-size="8" font-family="Liberation Sans" fill="#000" textLength="12" lengthAdjust="spacingAndGlyphs">750</text>
<text x="1057.5" y="945" text-anchor="middle" font-size="8" font-family="Liberation Sans" fill="#000" textLength="12" lengthAdjust="spacingAndGlyphs">800</text>
<text x="1107.5" y="945" text-anchor="middle" font-size="8" font-family="Liberation Sans" fill="#000" textLength="12" lengthAdjust="spacingAndGlyphs">850</text>
<text x="1157.5" y="945" text-anchor="middle" font-size="8" font-family="Liberation Sans" fill="#000" textLength="12" lengthAdjust="spacingAndGlyphs">900</text>
<text x="1207.5" y="945" text-anchor="middle" font-size="8" font-family="Liberation Sans" fill="#000" textLength="12" lengthAdjust="spacingAndGlyphs">950</text>
<rect x="282" y="938" width="1" height="3" fill="#000"/>
<rect x="332" y="938" width="1" height="3" fill="#000"/>
<rect x="382" y="938" width="1" height="3" fill="#000"/>
<rect x="432" y="938" width="1" height="3" fill="#000"/>
<rect x="482" y="938" width="1" height="3" fill="#000"/>
<rect x="532" y="938" width="1" height="3" fill="#000"/>
<rect x="582" y="938" width="1" height="3" fill="#000"/>
<rect x="632" y="938" width="1" height="3" fill="#000"/>
<rect x="682" y="938" width="1" height="3" fill="#000"/>
<rect x="732" y="938" width="1" height="3" fill="#000"/>
<rect x="782" y="938" width="1" height="3" fill="#000"/>
<rect x="832" y="938" width="1" height="3" fill="#000"/>
<rect x="882" y="938" width="1" height="3" fill="#000"/>
<rect x="932" y="938" width="1" height="3" fill="#000"/>
<rect x="982" y="938" width="1" height="3" fill="#000"/>
<rect x="1032" y="938" width="1" height="3" fill="#000"/>
<rect x="1082" y="938" width="1" height="3" fill="#000"/>
<rect x="1132" y="938" width="1" height="3" fill="#000"/>
<rect x="1182" y="938" width="1" height="3" fill="#000"/>
<rect x="1232" y="938" width="1" height="3" fill="#000"/>
<rect x="294" y="936" width="365" height="10" fill="#000"/>
<g clip-path="url(#bcb2)"><text x="307.5" y="945" text-anchor="middle" font-size="8" font-family="Liberation Sans" fill="#fff" textLength="8" lengthAdjust="spacingAndGlyphs">50</text><text x="357.5" y="945" text-anchor="middle" font-size="8" font-family="Liberation Sans" fill="#fff" textLength="12" lengthAdjust="spacingAndGlyphs">100</text><text x="407.5" y="945" text-anchor="middle" font-size="8" font-family="Liberation Sans" fill="#fff" textLength="12" lengthAdjust="spacingAndGlyphs">150</text><text x="457.5" y="945" text-anchor="middle" font-size="8" font-family="Liberation Sans" fill="#fff" textLength="12" lengthAdjust="spacingAndGlyphs">200</text><text x="507.5" y="945" text-anchor="middle" font-size="8" font-family="Liberation Sans" fill="#fff" textLength="12" lengthAdjust="spacingAndGlyphs">250</text><text x="557.5" y="945" text-anchor="middle" font-size="8" font-family="Liberation Sans" fill="#fff" textLength="12" lengthAdjust="spacingAndGlyphs">300</text><text x="607.5" y="945" text-anchor="middle" font-size="8" font-family="Liberation Sans" fill="#fff" textLength="12" lengthAdjust="spacingAndGlyphs">350</text><text x="657.5" y="945" text-anchor="middle" font-size="8" font-family="Liberation Sans" fill="#fff" textLength="12" lengthAdjust="spacingAndGlyphs">400</text><text x="707.5" y="945" text-anchor="middle" font-size="8" font-family="Liberation Sans" fill="#fff" textLength="12" lengthAdjust="spacingAndGlyphs">450</text><text x="757.5" y="945" text-anchor="middle" font-size="8" font-family="Liberation Sans" fill="#fff" textLength="12" lengthAdjust="spacingAndGlyphs">500</text><text x="807.5" y="945" text-anchor="middle" font-size="8" font-family="Liberation Sans" fill="#fff" textLength="12" lengthAdjust="spacingAndGlyphs">550</text><text x="857.5" y="945" text-anchor="middle" font-size="8" font-family="Liberation Sans" fill="#fff" textLength="12" lengthAdjust="spacingAndGlyphs">600</text><text x="907.5" y="945" text-anchor="middle" font-size="8" font-family="Liberation Sans" fill="#fff" textLength="12" lengthAdjust="spacingAndGlyphs">650</text><text x="957.5" y="945" text-anchor="middle" font-size="8" font-family="Liberation Sans" fill="#fff" textLength="12" lengthAdjust="spacingAndGlyphs">700</text><text x="1007.5" y="945" text-anchor="middle" font-size="8" font-family="Liberation Sans" fill="#fff" textLength="12" lengthAdjust="spacingAndGlyphs">750</text><text x="1057.5" y="945" text-anchor="middle" font-size="8" font-family="Liberation Sans" fill="#fff" textLength="12" lengthAdjust="spacingAndGlyphs">800</text><text x="1107.5" y="945" text-anchor="middle" font-size="8" font-family="Liberation Sans" fill="#fff" textLength="12" lengthAdjust="spacingAndGlyphs">850</text><text x="1157.5" y="945" text-anchor="middle" font-size="8" font-family="Liberation Sans" fill="#fff" textLength="12" lengthAdjust="spacingAndGlyphs">900</text><text x="1207.5" y="945" text-anchor="middle" font-size="8" font-family="Liberation Sans" fill="#fff" textLength="12" lengthAdjust="spacingAndGlyphs">950</text><rect x="282" y="938" width="1" height="3" fill="#fff"/><rect x="332" y="938" width="1" height="3" fill="#fff"/><rect x="382" y="938" width="1" height="3" fill="#fff"/><rect x="432" y="938" width="1" height="3" fill="#fff"/><rect x="482" y="938" width="1" height="3" fill="#fff"/><rect x="532" y="938" width="1" height="3" fill="#fff"/><rect x="582" y="938" width="1" height="3" fill="#fff"/><rect x="632" y="938" width="1" height="3" fill="#fff"/><rect x="682" y="938" width="1" height="3" fill="#fff"/><rect x="732" y="938" width="1" height="3" fill="#fff"/><rect x="782" y="938" width="1" height="3" fill="#fff"/><rect x="832" y="938" width="1" height="3" fill="#fff"/><rect x="882" y="938" width="1" height="3" fill="#fff"/><rect x="932" y="938" width="1" height="3" fill="#fff"/><rect x="982" y="938" width="1" height="3" fill="#fff"/><rect x="1032" y="938" width="1" height="3" fill="#fff"/><rect x="1082" y="938" width="1" height="3" fill="#fff"/><rect x="1132" y="938" width="1" height="3" fill="#fff"/><rect x="1182" y="938" width="1" height="3" fill="#fff"/><rect x="1232" y="938" width="1" height="3" fill="#fff"/></g>
</svg>
<div class="a" style="left:1252px;top:944px;width:17px;height:12px;background:#fff"></div>
<div class="a" style="left:1258px;top:945px;font-size:8px;line-height:10px;color:#222">px</div>
<div class="a" style="left:1278px;top:117px;width:2px;height:848px;background:linear-gradient(90deg,#9a9a9a,#6a6a6a)"></div><!-- title bar blurred background -->
<div class="a" style="left:0;top:0;width:1280px;height:21px;overflow:hidden">
<div class="a" style="left:480px;top:-6px;width:110px;height:34px;background:#f6f6f6;filter:blur(6px)"></div>
<div class="a" style="left:1110px;top:-6px;width:70px;height:34px;background:#f2f2f2;filter:blur(6px)"></div>
<div class="a" style="left:202px;top:6px;width:16px;height:13px;background:#8a8a8a;filter:blur(2.5px);opacity:.85"></div>
<div class="a" style="left:224px;top:9px;width:40px;height:8px;background:#b4b4b4;filter:blur(3px);opacity:.8"></div>
<div class="a" style="left:299px;top:6px;width:16px;height:13px;background:#a8b8cc;filter:blur(2.5px);opacity:.85"></div>
<div class="a" style="left:321px;top:9px;width:40px;height:8px;background:#b4b4b4;filter:blur(3px);opacity:.8"></div>
<div class="a" style="left:395px;top:6px;width:16px;height:13px;background:#8a968a;filter:blur(2.5px);opacity:.85"></div>
<div class="a" style="left:417px;top:9px;width:40px;height:8px;background:#b4b4b4;filter:blur(3px);opacity:.8"></div>
<div class="a" style="left:492px;top:6px;width:16px;height:13px;background:#4a4a4a;filter:blur(2.5px);opacity:.85"></div>
<div class="a" style="left:514px;top:9px;width:40px;height:8px;background:#b4b4b4;filter:blur(3px);opacity:.8"></div>
<div class="a" style="left:591px;top:6px;width:16px;height:13px;background:#e0a0a0;filter:blur(2.5px);opacity:.85"></div>
<div class="a" style="left:613px;top:9px;width:40px;height:8px;background:#b4b4b4;filter:blur(3px);opacity:.8"></div>
<div class="a" style="left:689px;top:6px;width:16px;height:13px;background:#a0a0b8;filter:blur(2.5px);opacity:.85"></div>
<div class="a" style="left:711px;top:9px;width:40px;height:8px;background:#b4b4b4;filter:blur(3px);opacity:.8"></div>
<div class="a" style="left:787px;top:6px;width:16px;height:13px;background:#90b8a0;filter:blur(2.5px);opacity:.85"></div>
<div class="a" style="left:809px;top:9px;width:40px;height:8px;background:#b4b4b4;filter:blur(3px);opacity:.8"></div>
<div class="a" style="left:882px;top:6px;width:16px;height:13px;background:#dcc080;filter:blur(2.5px);opacity:.85"></div>
<div class="a" style="left:904px;top:9px;width:40px;height:8px;background:#b4b4b4;filter:blur(3px);opacity:.8"></div>
<div class="a" style="left:982px;top:6px;width:16px;height:13px;background:#e09090;filter:blur(2.5px);opacity:.85"></div>
<div class="a" style="left:1004px;top:9px;width:40px;height:8px;background:#b4b4b4;filter:blur(3px);opacity:.8"></div>
<div class="a" style="left:1077px;top:6px;width:16px;height:13px;background:#a0a0a0;filter:blur(2.5px);opacity:.85"></div>
</div>
<svg class="a" style="left:0;top:2px" width="18" height="18" viewBox="0 0 18 18"><defs><linearGradient id="tfb" x1="0" y1="0" x2="0" y2="1"><stop offset="0" stop-color="#60b8f0"/><stop offset="1" stop-color="#0a6ab8"/></linearGradient><linearGradient id="tfy" x1="0" y1="0" x2="0" y2="1"><stop offset="0" stop-color="#f8f890"/><stop offset="1" stop-color="#d8d000"/></linearGradient></defs><path d="M7.5 1A8 8 0 0 0 7.5 17V10H5.5V8H7.5Z" fill="url(#tfb)"/><path d="M9.5 1.5A7.5 7.8 0 0 1 9.5 16.5Z" fill="url(#tfy)"/></svg>
<div class="a" style="left:21px;top:4px;font-size:12px;line-height:14px;color:#000">Fighter Factory Ultimate</div>
<!-- window buttons -->
<div class="a" style="left:1174px;top:-2px;width:103px;height:20px;border:1px solid #4e4e4e;border-radius:0 0 4px 4px;overflow:hidden;background:#fff">
 <div class="a" style="left:0;top:0;width:28px;height:19px;background:linear-gradient(#f6f6f6 0,#eaeaea 9px,#cfd1d8 10px,#dfe1e8 19px);border-right:1px solid #6a6a6a"></div>
 <div class="a" style="left:29px;top:0;width:26px;height:19px;background:linear-gradient(#f6f6f6 0,#eaeaea 9px,#cfd1d8 10px,#dfe1e8 19px);border-right:1px solid #4e4e4e"></div>
 <div class="a" style="left:56px;top:0;width:47px;height:19px;background:linear-gradient(#eda898 0,#e08068 9px,#c84428 10px,#e06a48 19px)"></div>
</div>
<svg class="a" style="left:1180px;top:0" width="100" height="18" viewBox="1180 0 100 18">
<rect x="1183.5" y="8.5" width="11" height="4" rx="1" fill="#fff" stroke="#3a3a3a"/>
<rect x="1212.5" y="2.5" width="8" height="8" fill="#fff" stroke="#3a3a3a"/>
<rect x="1209.5" y="5.5" width="8" height="8" fill="#fff" stroke="#3a3a3a"/>
<rect x="1212" y="8" width="3" height="3" fill="#3a3a3a"/>
<path d="M1249 4l4 3.5 4-3.5 2.5 2-4 3.5 4 3.5-2.5 2-4-3.5-4 3.5-2.5-2 4-3.5-4-3.5z" fill="#fff" stroke="#5a2010" stroke-width=".8"/>
</svg>
<!-- status bar -->
<div class="a" style="left:0;top:960px;width:1278px;height:3px;background:#f8f8f8"></div>
<div class="a" style="left:0;top:963px;width:1280px;height:2px;background:#6a6a6a"></div>
<div class="a" style="left:0;top:965px;width:1280px;height:2px;background:#fff"></div>
<div class="a" style="left:0;top:967px;width:99px;height:17px;border-top:1px solid #a0a0a0;border-left:1px solid #a0a0a0;border-right:1px solid #fff"></div>
<div class="a" style="left:102px;top:967px;width:297px;height:17px;border-top:1px solid #a0a0a0;border-left:1px solid #a0a0a0;border-right:1px solid #fff"></div>
<div class="a" style="left:402px;top:967px;width:878px;height:17px;border-top:1px solid #a0a0a0;border-left:1px solid #a0a0a0"></div>
<!-- window left edge -->
<div class="a" style="left:0;top:162px;width:4px;height:798px;background:#fafafa;border-left:1px solid #e4e4e4"></div>
<div class="a" style="left:248px;top:162px;width:1px;height:798px;background:#fff"></div>
<div class="a" style="left:249px;top:329px;width:8px;height:145px;background:#f0f0f0;border-top:1px solid #fff;border-left:1px solid #fff;border-right:1px solid #a0a0a0;border-bottom:1px solid #696969;box-shadow:inset 0 -1px 0 #a0a0a0"></div>
<div class="a" style="left:0;top:984px;width:1280px;height:40px;background:linear-gradient(90deg,#3c4038 0,#50544a 8%,#5a5e50 20%,#5c604e 40%,#6a6c5a 55%,#727260 65%,#6a6a58 75%,#626452 85%,#5a5c4e 100%);border-top:1px solid #1e221e"></div>
<div class="a" style="left:0;top:985px;width:1280px;height:39px;background:linear-gradient(rgba(255,255,255,.12),rgba(255,255,255,0) 40%,rgba(0,0,0,.05))"></div>
<div class="a" style="left:0;top:985px;width:1280px;height:1px;background:rgba(255,255,255,.35)"></div>
<div class="a" style="left:0;top:985px;width:1280px;height:39px;overflow:hidden"><div class="a" style="left:600px;top:0;width:60px;height:39px;background:#7a7c68;filter:blur(12px);opacity:.6"></div><div class="a" style="left:880px;top:0;width:80px;height:39px;background:#808270;filter:blur(12px);opacity:.6"></div></div>
<!-- task buttons -->
<div class="a tb" style="left:122px;width:58px;background:linear-gradient(rgba(255,255,255,.35),rgba(255,255,255,.18))"></div>
<div class="a tb" style="left:245px;width:55px"></div>
<div class="a tb" style="left:308px;width:58px"></div>
<div class="a tb" style="left:370px;width:58px"></div>
<div class="a tb" style="left:432px;width:58px"></div>
<div class="a tb" style="left:494px;width:51px;background:linear-gradient(#cfcfc8,#b4b4ac);box-shadow:inset 0 0 0 1px rgba(255,255,255,.6)"></div>
<div class="a" style="left:546px;top:986px;width:4px;height:37px;border:1px solid rgba(0,0,0,.5);background:rgba(255,255,255,.25)"></div>
<svg class="a" style="left:0;top:984px" width="560" height="40" viewBox="0 984 560 40">
<defs>
<radialGradient id="orb" cx=".5" cy=".35" r=".65"><stop offset="0" stop-color="#a8d8f8"/><stop offset=".5" stop-color="#2a78c0"/><stop offset="1" stop-color="#0a2a60"/></radialGradient>
<linearGradient id="ief" x1="0" y1="0" x2="0" y2="1"><stop offset="0" stop-color="#7ad4ff"/><stop offset="1" stop-color="#1a7ad8"/></linearGradient>
<linearGradient id="fold" x1="0" y1="0" x2="0" y2="1"><stop offset="0" stop-color="#fff0b8"/><stop offset="1" stop-color="#e8c060"/></linearGradient>
<radialGradient id="yan" cx=".4" cy=".35" r=".7"><stop offset="0" stop-color="#ffffff"/><stop offset="1" stop-color="#d8d8d8"/></radialGradient>
</defs>
<!-- start orb -->
<defs><linearGradient id="orb2" x1="0" y1="0" x2="0" y2="1"><stop offset="0" stop-color="#e0e8f0"/><stop offset=".45" stop-color="#7c9cbc"/><stop offset=".5" stop-color="#0a4488"/><stop offset=".75" stop-color="#0a70b8"/><stop offset="1" stop-color="#18d8f8"/></linearGradient></defs>
<circle cx="27" cy="1004.3" r="18.6" fill="url(#orb2)" stroke="#203040" stroke-width="1"/>
<circle cx="27" cy="1004.3" r="17.6" fill="none" stroke="#a8c0d0" stroke-width=".6" opacity=".7"/>
<path d="M29 1003c-4-3-8-3-12-2l2-8c4-1 8-1 11 1z" fill="#f06020" stroke="#1a2a30" stroke-width=".7"/>
<path d="M29 1003c3 3 7 3 10 1l-2-9c-3 2-6 2-9 0z" fill="#90c840" stroke="#1a2a30" stroke-width=".7"/>
<path d="M27 1006c-4-3-8-3-12-2l-1 8c4-1 8-1 12 2z" fill="#40a0e0" stroke="#1a2a30" stroke-width=".7"/>
<path d="M28 1006c3 3 7 3 9 2l-2 8c-3 1-6 1-9-2z" fill="#f8c030" stroke="#1a2a30" stroke-width=".7"/>
<!-- IE -->
<path d="M101.5 1005.5h-16a6 5.5 0 0 0 11 2.5h4.8a12.5 12.5 0 1 1 .2-3.2z" fill="url(#ief)" stroke="#1a4a8a" stroke-width=".8"/>
<path d="M85.5 1001.5h11a5.5 5 0 0 0-11 0z" fill="#5c6052" stroke="#1a4a8a" stroke-width=".6"/>
<path d="M77 1016c-5-4 4-17 13-23 7-5 14-7 12-1" fill="none" stroke="#7a5a00" stroke-width="3.6" stroke-linecap="round"/>
<path d="M77 1016c-5-4 4-17 13-23 7-5 14-7 12-1" fill="none" stroke="#f8d030" stroke-width="2.2" stroke-linecap="round"/>
<!-- explorer folder -->
<path d="M136 996h9l2 2h19v18h-30z" fill="url(#fold)" stroke="#b89040" stroke-width=".8"/>
<rect x="139" y="993" width="3" height="2" fill="#30a030"/><rect x="147" y="993" width="3" height="2" fill="#d03030"/><rect x="155" y="995" width="3" height="2" fill="#3070d0"/>
<path d="M141 1018v-7h18v7h-4v-4h-10v4z" fill="#9ad0f0" stroke="#3a80c0" stroke-width="1"/>
<!-- WMP -->
<rect x="202" y="993" width="22" height="22" rx="1" fill="#7ab0e0" stroke="#3a6ab0" stroke-width=".8"/>
<rect x="199" y="991" width="21" height="22" rx="1" fill="#a8d0f0" stroke="#5a8ac8" stroke-width=".8"/>
<circle cx="209.5" cy="1002" r="8" fill="#f07020" stroke="#fff" stroke-width="1.5"/>
<path d="M207 997.5v9l6.5-4.5z" fill="#fff"/>
<!-- yandex -->
<circle cx="271" cy="1003.5" r="13.5" fill="url(#yan)"/>
<path d="M260 993l9 10v10h5v-10l9-10h-6l-5.5 6.5-5.5-6.5z" fill="#e80000"/>
<!-- skype -->
<ellipse cx="336.5" cy="1004" rx="14" ry="14.5" fill="#1aa8e8"/>
<text x="327.5" y="1013" font-family="Liberation Sans" font-weight="bold" font-size="20" fill="#fff">S</text>
<!-- kaspersky -->
<defs><linearGradient id="kr" x1="0" y1="0" x2="0" y2="1"><stop offset="0" stop-color="#ffa0a8"/><stop offset=".45" stop-color="#f86068"/><stop offset=".46" stop-color="#f00000"/><stop offset="1" stop-color="#e00000"/></linearGradient>
<linearGradient id="kb" x1="0" y1="0" x2="0" y2="1"><stop offset="0" stop-color="#c0c0c0"/><stop offset=".5" stop-color="#606060"/><stop offset=".51" stop-color="#000"/><stop offset="1" stop-color="#000"/></linearGradient></defs>
<path d="M383.5 988.5h9.5v8.5l8-8.5h14l-31.5 31.5z" fill="url(#kr)" stroke="#fff" stroke-width="1"/>
<path d="M397 1009l6-6.5 8 7.5 4-4v14h-14l4-4z" fill="url(#kb)" stroke="#fff" stroke-width="1"/>
<!-- download -->
<circle cx="461" cy="1004" r="12" fill="none" stroke="#40a8d8" stroke-width="3"/>
<circle cx="461" cy="1004" r="8" fill="#2a6a80"/>
<path d="M457 996h8v6h4l-8 8-8-8h4z" fill="#70c030" stroke="#308010" stroke-width=".8"/>
<!-- FF -->
<defs><linearGradient id="ffb" x1="0" y1="0" x2="0" y2="1"><stop offset="0" stop-color="#70c0f0"/><stop offset="1" stop-color="#0a70c0"/></linearGradient>
<linearGradient id="ffy2" x1="0" y1="0" x2="0" y2="1"><stop offset="0" stop-color="#f8f880"/><stop offset="1" stop-color="#d8d800"/></linearGradient></defs>
<path d="M518.5 988A15.5 15.5 0 0 0 518.5 1019V1005H515V1001H518.5Z" fill="url(#ffb)"/>
<path d="M522 989.5A13.5 14.5 0 0 1 534.5 1004H522Z" fill="url(#ffy2)"/>
<rect x="520" y="1001" width="4" height="18" fill="#c8c820"/>
<path d="M521 1006.5l6-1.5 6 1.5v5.5c0 4-3 6-6 7.5-3-1.5-6-3.5-6-7.5z" fill="#fff" stroke="#555" stroke-width=".5"/>
<path d="M522.3 1007.3l4.7-1.1v6.3h-4.7z" fill="#2070d0"/><path d="M527 1006.2l4.7 1.1v5.2h-4.7z" fill="#f0c020"/>
<path d="M522.3 1012.5h4.7v5.8c-2-1-4.3-2.5-4.7-5.8z" fill="#f0c020"/><path d="M527 1012.5h4.7c-.4 3.3-2.7 4.8-4.7 5.8z" fill="#2070d0"/>
</svg>
<!-- tray -->
<div class="a" style="left:1066px;top:995px;font-size:12px;line-height:14px;color:#ececec">RU</div>
<svg class="a" style="left:1090px;top:990px" width="100" height="30" viewBox="1090 990 100 30">
<path d="M1097 1007.5h9l-4.5-4.5z" fill="#f0f0f0"/>
<path d="M1119 998v14" stroke="#f0f0f0" stroke-width="1.6"/>
<path d="M1120 999h6l1 1h6l-2 3 2 3h-6l-1-1h-6z" fill="#f0f0f0"/>
<path d="M1142 1002h3l5-4v14l-5-4h-3z" fill="#f0f0f0"/>
<path d="M1152 1002a4 4 0 0 1 0 6M1154.5 1000a7 7 0 0 1 0 10" fill="none" stroke="#f0f0f0" stroke-width="1.2"/>
<rect x="1170.5" y="1001.5" width="11" height="8" fill="#333" stroke="#f0f0f0"/>
<path d="M1167 998v9M1165 998h4M1173 1012h6M1176 1010v2" stroke="#f0f0f0" stroke-width="1.2"/>
</svg>
<div class="a" style="left:1213px;top:990px;font-size:12px;line-height:14px;color:#f0f0f0">22:13</div>
<div class="a" style="left:1200px;top:1006px;font-size:12px;line-height:14px;color:#f0f0f0;letter-spacing:-.3px">27.04.2013</div>
<div class="a" style="left:1265px;top:986px;width:15px;height:38px;border:1px solid rgba(0,0,0,.5);background:linear-gradient(90deg,rgba(255,255,255,.35),rgba(255,255,255,.15))"></div>
</body></html>
